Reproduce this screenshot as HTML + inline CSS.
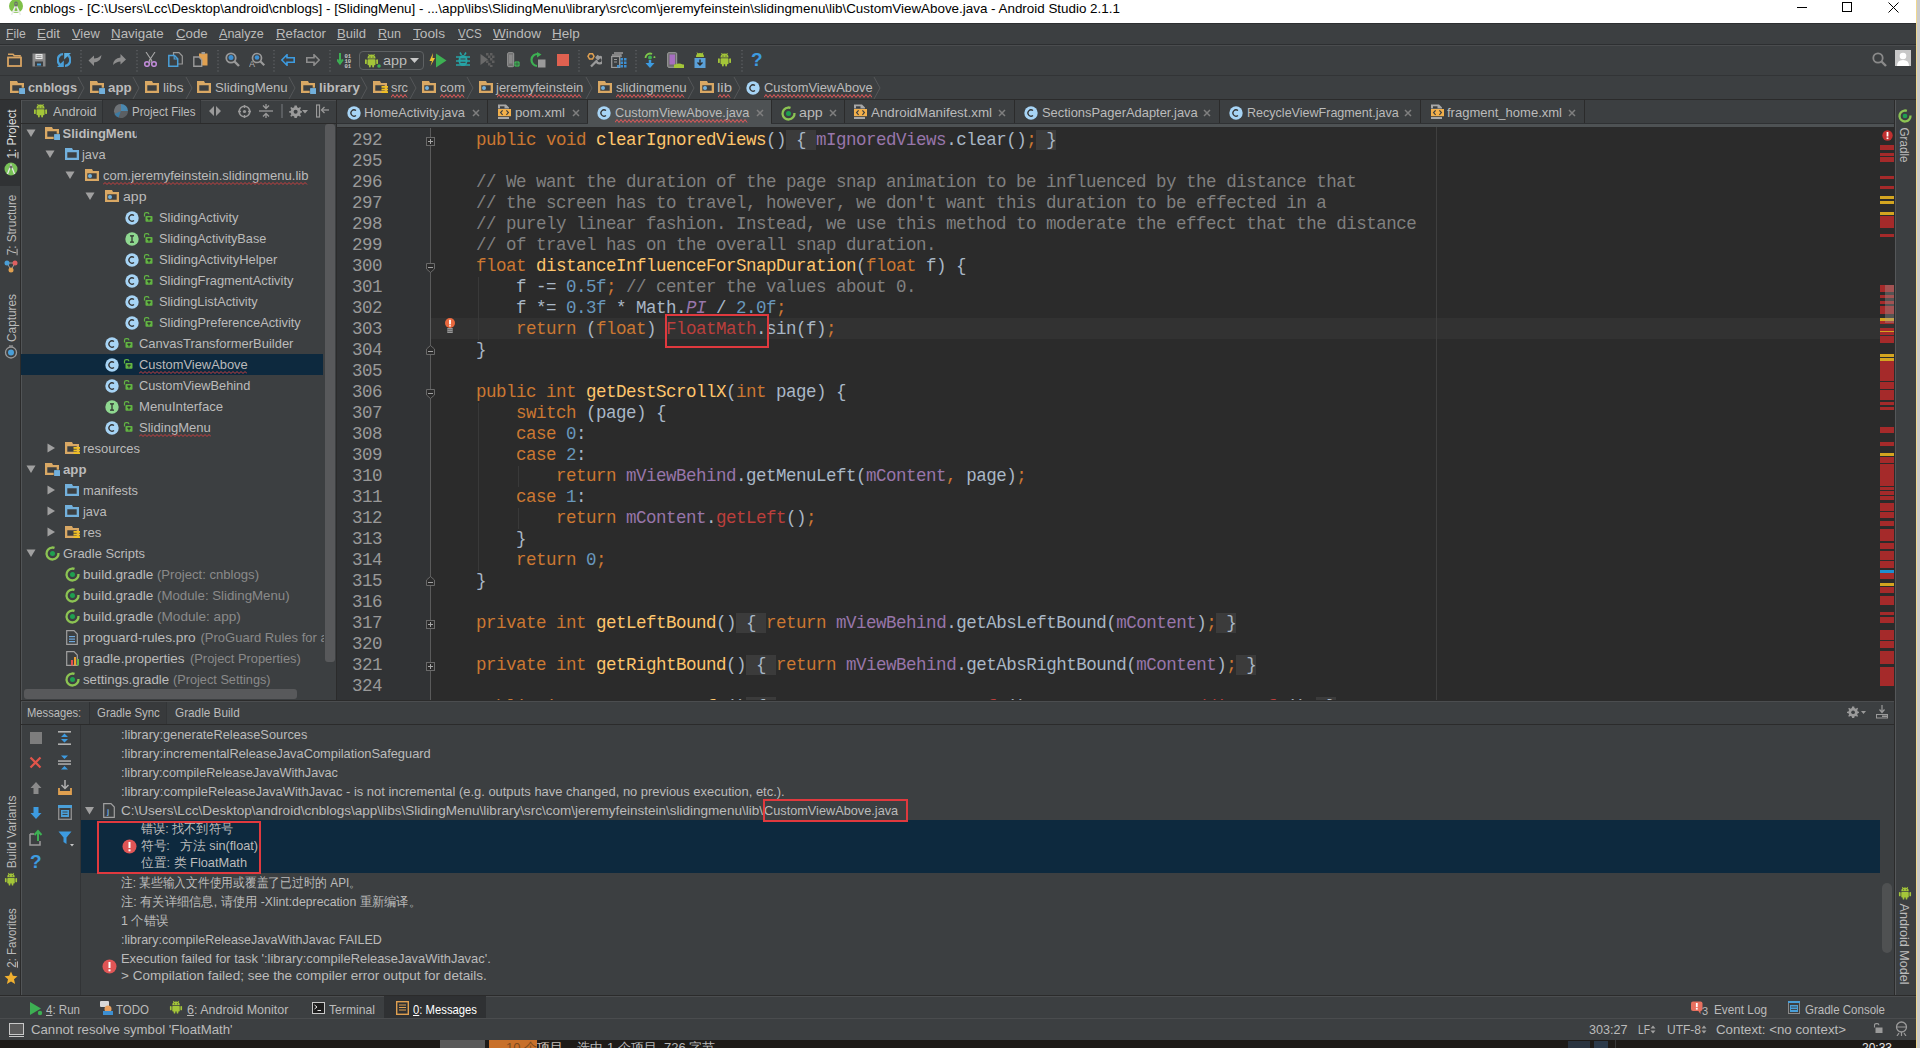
<!DOCTYPE html><html><head><meta charset="utf-8"><style>
*{margin:0;padding:0;box-sizing:border-box}
html,body{width:1920px;height:1048px;overflow:hidden;background:#3c3f41}
body{position:relative;font-family:"Liberation Sans",sans-serif}
div,span.a{position:absolute}
.t{white-space:pre}
.code span{position:static}
</style></head><body><div style="left:0px;top:0px;width:1920px;height:1048px;background:#3c3f41;"></div>
<div style="left:0px;top:0px;width:1916px;height:23px;background:#ffffff;"></div>
<div style="left:1916px;top:0px;width:1px;height:1048px;background:#f0d890;"></div>
<div style="left:1917px;top:0px;width:3px;height:1048px;background:#cbcbcb;"></div>
<div style="left:0px;top:23px;width:1916px;height:22px;background:#3c3f41;"></div>
<div style="left:0px;top:23px;width:1916px;height:1px;background:#2d2f31;"></div>
<div style="left:0px;top:44px;width:1916px;height:1px;background:#2d2f31;"></div>
<div style="left:0px;top:45px;width:1916px;height:1px;background:#4a4c4e;"></div>
<div style="left:0px;top:46px;width:1916px;height:29px;background:#3c3f41;"></div>
<div style="left:0px;top:75px;width:1916px;height:1px;background:#323436;"></div>
<div style="left:0px;top:76px;width:1916px;height:23px;background:#3c3f41;"></div>
<div style="left:0px;top:99px;width:1916px;height:1px;background:#2b2b2b;"></div>
<div class="t" style="left:29px;top:0px;height:17px;line-height:17px;font-size:13.4px;color:#000000;font-family:'Liberation Sans',sans-serif;">cnblogs - [C:\Users\Lcc\Desktop\android\cnblogs] - [SlidingMenu] - ...\app\libs\SlidingMenu\library\src\com\jeremyfeinstein\slidingmenu\lib\CustomViewAbove.java - Android Studio 2.1.1</div>
<div class="t" style="left:5.5px;top:24px;height:20px;line-height:20px;font-size:13px;color:#bbbbbb;font-family:'Liberation Sans',sans-serif;transform:scaleX(0.9405);transform-origin:0 0;"><u>F</u>ile</div>
<div class="t" style="left:36.5px;top:24px;height:20px;line-height:20px;font-size:13px;color:#bbbbbb;font-family:'Liberation Sans',sans-serif;transform:scaleX(1.0267);transform-origin:0 0;"><u>E</u>dit</div>
<div class="t" style="left:71.5px;top:24px;height:20px;line-height:20px;font-size:13px;color:#bbbbbb;font-family:'Liberation Sans',sans-serif;transform:scaleX(0.9913);transform-origin:0 0;"><u>V</u>iew</div>
<div class="t" style="left:110.5px;top:24px;height:20px;line-height:20px;font-size:13px;color:#bbbbbb;font-family:'Liberation Sans',sans-serif;transform:scaleX(1.0271);transform-origin:0 0;"><u>N</u>avigate</div>
<div class="t" style="left:175.5px;top:24px;height:20px;line-height:20px;font-size:13px;color:#bbbbbb;font-family:'Liberation Sans',sans-serif;transform:scaleX(1.0200);transform-origin:0 0;"><u>C</u>ode</div>
<div class="t" style="left:218.5px;top:24px;height:20px;line-height:20px;font-size:13px;color:#bbbbbb;font-family:'Liberation Sans',sans-serif;transform:scaleX(0.9665);transform-origin:0 0;"><u>A</u>nalyze</div>
<div class="t" style="left:275.5px;top:24px;height:20px;line-height:20px;font-size:13px;color:#bbbbbb;font-family:'Liberation Sans',sans-serif;transform:scaleX(1.0177);transform-origin:0 0;"><u>R</u>efactor</div>
<div class="t" style="left:336.5px;top:24px;height:20px;line-height:20px;font-size:13px;color:#bbbbbb;font-family:'Liberation Sans',sans-serif;transform:scaleX(1.0032);transform-origin:0 0;"><u>B</u>uild</div>
<div class="t" style="left:377.5px;top:24px;height:20px;line-height:20px;font-size:13px;color:#bbbbbb;font-family:'Liberation Sans',sans-serif;transform:scaleX(0.9644);transform-origin:0 0;"><u>R</u>un</div>
<div class="t" style="left:412.5px;top:24px;height:20px;line-height:20px;font-size:13px;color:#bbbbbb;font-family:'Liberation Sans',sans-serif;transform:scaleX(1.0544);transform-origin:0 0;"><u>T</u>ools</div>
<div class="t" style="left:457.5px;top:24px;height:20px;line-height:20px;font-size:13px;color:#bbbbbb;font-family:'Liberation Sans',sans-serif;transform:scaleX(0.8866);transform-origin:0 0;"><u>V</u>CS</div>
<div class="t" style="left:492.5px;top:24px;height:20px;line-height:20px;font-size:13px;color:#bbbbbb;font-family:'Liberation Sans',sans-serif;transform:scaleX(1.0381);transform-origin:0 0;"><u>W</u>indow</div>
<div class="t" style="left:551.5px;top:24px;height:20px;line-height:20px;font-size:13px;color:#bbbbbb;font-family:'Liberation Sans',sans-serif;transform:scaleX(1.0360);transform-origin:0 0;"><u>H</u>elp</div>
<div style="left:0px;top:100px;width:20px;height:895px;background:#3c3f41;"></div>
<div style="left:20px;top:100px;width:1px;height:895px;background:#2b2b2b;"></div>
<div style="left:21px;top:100px;width:1px;height:895px;background:#515456;"></div>
<div style="left:0px;top:100px;width:20px;height:86px;background:#303234;"></div>
<div style="left:22px;top:100px;width:315px;height:600px;background:#3c3f41;"></div>
<div style="left:336px;top:100px;width:1px;height:600px;background:#2b2b2b;"></div>
<div style="left:21px;top:123px;width:315px;height:1px;background:#2b2b2b;"></div>
<div style="left:22px;top:100px;width:314px;height:1px;background:#4b4d4f;"></div>
<div style="left:337px;top:100px;width:1557px;height:24px;background:#3c3f41;"></div>
<div style="left:337px;top:124px;width:1557px;height:3px;background:#4e5254;"></div>
<div style="left:337px;top:127px;width:1557px;height:573px;background:#2b2b2b;"></div>
<div style="left:337px;top:128px;width:93px;height:572px;background:#313335;"></div>
<div style="left:430px;top:128px;width:1px;height:572px;background:#5a5a5a;"></div>
<div style="left:1894px;top:100px;width:1px;height:895px;background:#2b2b2b;"></div>
<div style="left:1895px;top:100px;width:21px;height:895px;background:#3c3f41;"></div>
<div style="left:1895px;top:100px;width:1px;height:895px;background:#555759;"></div>
<div style="left:21px;top:700px;width:1873px;height:1px;background:#2b2b2b;"></div>
<div style="left:21px;top:701px;width:1873px;height:1px;background:#4b4d4f;"></div>
<div style="left:21px;top:724px;width:1873px;height:1px;background:#2b2b2b;"></div>
<div style="left:80px;top:725px;width:1px;height:270px;background:#323436;"></div>
<div style="left:0px;top:995px;width:1916px;height:1px;background:#2b2b2b;"></div>
<div style="left:0px;top:996px;width:1916px;height:1px;background:#4b4d4f;"></div>
<div style="left:0px;top:1018px;width:1916px;height:1px;background:#4a4c4e;"></div>
<div style="left:0px;top:1040px;width:1916px;height:8px;background:#1f1f1f;"></div>
<div style="left:337px;top:127px;width:1557px;height:573px;overflow:hidden">
<div style="left:94px;top:191px;width:1463px;height:21px;background:#323232;"></div>
<div style="left:1099px;top:0px;width:1px;height:573px;background:#3f3f3f;"></div>
<div class="t" style="left:0;top:3px;width:45px;text-align:right;height:21px;line-height:21px;font:17.5px 'Liberation Mono',monospace;letter-spacing:-0.5px;color:#999999">292</div>
<div class="t code" style="left:139px;top:3px;height:21px;line-height:21px;font:17.5px 'Liberation Mono',monospace;letter-spacing:-0.5px;color:#a9b7c6"><span style="color:#cc7832;">public </span><span style="color:#cc7832;">void </span><span style="color:#ffc66d;">clearIgnoredViews</span><span style="color:#a9b7c6;">()</span><span style="color:#a9b7c6;background:#3b3b3b;"> { </span><span style="color:#9876aa;">mIgnoredViews</span><span style="color:#a9b7c6;">.clear()</span><span style="color:#cc7832;">;</span><span style="color:#a9b7c6;background:#3b3b3b;"> }</span></div>
<div class="t" style="left:0;top:24px;width:45px;text-align:right;height:21px;line-height:21px;font:17.5px 'Liberation Mono',monospace;letter-spacing:-0.5px;color:#999999">295</div>
<div class="t" style="left:0;top:45px;width:45px;text-align:right;height:21px;line-height:21px;font:17.5px 'Liberation Mono',monospace;letter-spacing:-0.5px;color:#999999">296</div>
<div class="t code" style="left:139px;top:45px;height:21px;line-height:21px;font:17.5px 'Liberation Mono',monospace;letter-spacing:-0.5px;color:#a9b7c6"><span style="color:#808080;">// We want the duration of the page snap animation to be influenced by the distance that</span></div>
<div class="t" style="left:0;top:66px;width:45px;text-align:right;height:21px;line-height:21px;font:17.5px 'Liberation Mono',monospace;letter-spacing:-0.5px;color:#999999">297</div>
<div class="t code" style="left:139px;top:66px;height:21px;line-height:21px;font:17.5px 'Liberation Mono',monospace;letter-spacing:-0.5px;color:#a9b7c6"><span style="color:#808080;">// the screen has to travel, however, we don't want this duration to be effected in a</span></div>
<div class="t" style="left:0;top:87px;width:45px;text-align:right;height:21px;line-height:21px;font:17.5px 'Liberation Mono',monospace;letter-spacing:-0.5px;color:#999999">298</div>
<div class="t code" style="left:139px;top:87px;height:21px;line-height:21px;font:17.5px 'Liberation Mono',monospace;letter-spacing:-0.5px;color:#a9b7c6"><span style="color:#808080;">// purely linear fashion. Instead, we use this method to moderate the effect that the distance</span></div>
<div class="t" style="left:0;top:108px;width:45px;text-align:right;height:21px;line-height:21px;font:17.5px 'Liberation Mono',monospace;letter-spacing:-0.5px;color:#999999">299</div>
<div class="t code" style="left:139px;top:108px;height:21px;line-height:21px;font:17.5px 'Liberation Mono',monospace;letter-spacing:-0.5px;color:#a9b7c6"><span style="color:#808080;">// of travel has on the overall snap duration.</span></div>
<div class="t" style="left:0;top:129px;width:45px;text-align:right;height:21px;line-height:21px;font:17.5px 'Liberation Mono',monospace;letter-spacing:-0.5px;color:#999999">300</div>
<div class="t code" style="left:139px;top:129px;height:21px;line-height:21px;font:17.5px 'Liberation Mono',monospace;letter-spacing:-0.5px;color:#a9b7c6"><span style="color:#cc7832;">float </span><span style="color:#ffc66d;">distanceInfluenceForSnapDuration</span><span style="color:#a9b7c6;">(</span><span style="color:#cc7832;">float </span><span style="color:#a9b7c6;">f) {</span></div>
<div class="t" style="left:0;top:150px;width:45px;text-align:right;height:21px;line-height:21px;font:17.5px 'Liberation Mono',monospace;letter-spacing:-0.5px;color:#999999">301</div>
<div class="t code" style="left:139px;top:150px;height:21px;line-height:21px;font:17.5px 'Liberation Mono',monospace;letter-spacing:-0.5px;color:#a9b7c6"><span style="color:#a9b7c6;">    f -= </span><span style="color:#6897bb;">0.5f</span><span style="color:#cc7832;">;</span><span style="color:#808080;"> // center the values about 0.</span></div>
<div class="t" style="left:0;top:171px;width:45px;text-align:right;height:21px;line-height:21px;font:17.5px 'Liberation Mono',monospace;letter-spacing:-0.5px;color:#999999">302</div>
<div class="t code" style="left:139px;top:171px;height:21px;line-height:21px;font:17.5px 'Liberation Mono',monospace;letter-spacing:-0.5px;color:#a9b7c6"><span style="color:#a9b7c6;">    f *= </span><span style="color:#6897bb;">0.3f</span><span style="color:#a9b7c6;"> * Math.</span><span style="color:#9876aa;font-style:italic;">PI</span><span style="color:#a9b7c6;"> / </span><span style="color:#6897bb;">2.0f</span><span style="color:#cc7832;">;</span></div>
<div class="t" style="left:0;top:192px;width:45px;text-align:right;height:21px;line-height:21px;font:17.5px 'Liberation Mono',monospace;letter-spacing:-0.5px;color:#999999">303</div>
<div class="t code" style="left:139px;top:192px;height:21px;line-height:21px;font:17.5px 'Liberation Mono',monospace;letter-spacing:-0.5px;color:#a9b7c6"><span style="color:#cc7832;">    return </span><span style="color:#a9b7c6;">(</span><span style="color:#cc7832;">float</span><span style="color:#a9b7c6;">) </span><span style="color:#bc3f3c;">FloatMath</span><span style="color:#a9b7c6;">.sin(f)</span><span style="color:#cc7832;">;</span></div>
<div class="t" style="left:0;top:213px;width:45px;text-align:right;height:21px;line-height:21px;font:17.5px 'Liberation Mono',monospace;letter-spacing:-0.5px;color:#999999">304</div>
<div class="t code" style="left:139px;top:213px;height:21px;line-height:21px;font:17.5px 'Liberation Mono',monospace;letter-spacing:-0.5px;color:#a9b7c6"><span style="color:#a9b7c6;">}</span></div>
<div class="t" style="left:0;top:234px;width:45px;text-align:right;height:21px;line-height:21px;font:17.5px 'Liberation Mono',monospace;letter-spacing:-0.5px;color:#999999">305</div>
<div class="t" style="left:0;top:255px;width:45px;text-align:right;height:21px;line-height:21px;font:17.5px 'Liberation Mono',monospace;letter-spacing:-0.5px;color:#999999">306</div>
<div class="t code" style="left:139px;top:255px;height:21px;line-height:21px;font:17.5px 'Liberation Mono',monospace;letter-spacing:-0.5px;color:#a9b7c6"><span style="color:#cc7832;">public </span><span style="color:#cc7832;">int </span><span style="color:#ffc66d;">getDestScrollX</span><span style="color:#a9b7c6;">(</span><span style="color:#cc7832;">int </span><span style="color:#a9b7c6;">page) {</span></div>
<div class="t" style="left:0;top:276px;width:45px;text-align:right;height:21px;line-height:21px;font:17.5px 'Liberation Mono',monospace;letter-spacing:-0.5px;color:#999999">307</div>
<div class="t code" style="left:139px;top:276px;height:21px;line-height:21px;font:17.5px 'Liberation Mono',monospace;letter-spacing:-0.5px;color:#a9b7c6"><span style="color:#cc7832;">    switch </span><span style="color:#a9b7c6;">(page) {</span></div>
<div class="t" style="left:0;top:297px;width:45px;text-align:right;height:21px;line-height:21px;font:17.5px 'Liberation Mono',monospace;letter-spacing:-0.5px;color:#999999">308</div>
<div class="t code" style="left:139px;top:297px;height:21px;line-height:21px;font:17.5px 'Liberation Mono',monospace;letter-spacing:-0.5px;color:#a9b7c6"><span style="color:#cc7832;">    case </span><span style="color:#6897bb;">0</span><span style="color:#a9b7c6;">:</span></div>
<div class="t" style="left:0;top:318px;width:45px;text-align:right;height:21px;line-height:21px;font:17.5px 'Liberation Mono',monospace;letter-spacing:-0.5px;color:#999999">309</div>
<div class="t code" style="left:139px;top:318px;height:21px;line-height:21px;font:17.5px 'Liberation Mono',monospace;letter-spacing:-0.5px;color:#a9b7c6"><span style="color:#cc7832;">    case </span><span style="color:#6897bb;">2</span><span style="color:#a9b7c6;">:</span></div>
<div class="t" style="left:0;top:339px;width:45px;text-align:right;height:21px;line-height:21px;font:17.5px 'Liberation Mono',monospace;letter-spacing:-0.5px;color:#999999">310</div>
<div class="t code" style="left:139px;top:339px;height:21px;line-height:21px;font:17.5px 'Liberation Mono',monospace;letter-spacing:-0.5px;color:#a9b7c6"><span style="color:#cc7832;">        return </span><span style="color:#9876aa;">mViewBehind</span><span style="color:#a9b7c6;">.getMenuLeft(</span><span style="color:#9876aa;">mContent</span><span style="color:#cc7832;">, </span><span style="color:#a9b7c6;">page)</span><span style="color:#cc7832;">;</span></div>
<div class="t" style="left:0;top:360px;width:45px;text-align:right;height:21px;line-height:21px;font:17.5px 'Liberation Mono',monospace;letter-spacing:-0.5px;color:#999999">311</div>
<div class="t code" style="left:139px;top:360px;height:21px;line-height:21px;font:17.5px 'Liberation Mono',monospace;letter-spacing:-0.5px;color:#a9b7c6"><span style="color:#cc7832;">    case </span><span style="color:#6897bb;">1</span><span style="color:#a9b7c6;">:</span></div>
<div class="t" style="left:0;top:381px;width:45px;text-align:right;height:21px;line-height:21px;font:17.5px 'Liberation Mono',monospace;letter-spacing:-0.5px;color:#999999">312</div>
<div class="t code" style="left:139px;top:381px;height:21px;line-height:21px;font:17.5px 'Liberation Mono',monospace;letter-spacing:-0.5px;color:#a9b7c6"><span style="color:#cc7832;">        return </span><span style="color:#9876aa;">mContent</span><span style="color:#a9b7c6;">.</span><span style="color:#bc3f3c;">getLeft</span><span style="color:#a9b7c6;">()</span><span style="color:#cc7832;">;</span></div>
<div class="t" style="left:0;top:402px;width:45px;text-align:right;height:21px;line-height:21px;font:17.5px 'Liberation Mono',monospace;letter-spacing:-0.5px;color:#999999">313</div>
<div class="t code" style="left:139px;top:402px;height:21px;line-height:21px;font:17.5px 'Liberation Mono',monospace;letter-spacing:-0.5px;color:#a9b7c6"><span style="color:#a9b7c6;">    }</span></div>
<div class="t" style="left:0;top:423px;width:45px;text-align:right;height:21px;line-height:21px;font:17.5px 'Liberation Mono',monospace;letter-spacing:-0.5px;color:#999999">314</div>
<div class="t code" style="left:139px;top:423px;height:21px;line-height:21px;font:17.5px 'Liberation Mono',monospace;letter-spacing:-0.5px;color:#a9b7c6"><span style="color:#cc7832;">    return </span><span style="color:#6897bb;">0</span><span style="color:#cc7832;">;</span></div>
<div class="t" style="left:0;top:444px;width:45px;text-align:right;height:21px;line-height:21px;font:17.5px 'Liberation Mono',monospace;letter-spacing:-0.5px;color:#999999">315</div>
<div class="t code" style="left:139px;top:444px;height:21px;line-height:21px;font:17.5px 'Liberation Mono',monospace;letter-spacing:-0.5px;color:#a9b7c6"><span style="color:#a9b7c6;">}</span></div>
<div class="t" style="left:0;top:465px;width:45px;text-align:right;height:21px;line-height:21px;font:17.5px 'Liberation Mono',monospace;letter-spacing:-0.5px;color:#999999">316</div>
<div class="t" style="left:0;top:486px;width:45px;text-align:right;height:21px;line-height:21px;font:17.5px 'Liberation Mono',monospace;letter-spacing:-0.5px;color:#999999">317</div>
<div class="t code" style="left:139px;top:486px;height:21px;line-height:21px;font:17.5px 'Liberation Mono',monospace;letter-spacing:-0.5px;color:#a9b7c6"><span style="color:#cc7832;">private </span><span style="color:#cc7832;">int </span><span style="color:#ffc66d;">getLeftBound</span><span style="color:#a9b7c6;">()</span><span style="color:#a9b7c6;background:#3b3b3b;"> { </span><span style="color:#cc7832;">return </span><span style="color:#9876aa;">mViewBehind</span><span style="color:#a9b7c6;">.getAbsLeftBound(</span><span style="color:#9876aa;">mContent</span><span style="color:#a9b7c6;">)</span><span style="color:#cc7832;">;</span><span style="color:#a9b7c6;background:#3b3b3b;"> }</span></div>
<div class="t" style="left:0;top:507px;width:45px;text-align:right;height:21px;line-height:21px;font:17.5px 'Liberation Mono',monospace;letter-spacing:-0.5px;color:#999999">320</div>
<div class="t" style="left:0;top:528px;width:45px;text-align:right;height:21px;line-height:21px;font:17.5px 'Liberation Mono',monospace;letter-spacing:-0.5px;color:#999999">321</div>
<div class="t code" style="left:139px;top:528px;height:21px;line-height:21px;font:17.5px 'Liberation Mono',monospace;letter-spacing:-0.5px;color:#a9b7c6"><span style="color:#cc7832;">private </span><span style="color:#cc7832;">int </span><span style="color:#ffc66d;">getRightBound</span><span style="color:#a9b7c6;">()</span><span style="color:#a9b7c6;background:#3b3b3b;"> { </span><span style="color:#cc7832;">return </span><span style="color:#9876aa;">mViewBehind</span><span style="color:#a9b7c6;">.getAbsRightBound(</span><span style="color:#9876aa;">mContent</span><span style="color:#a9b7c6;">)</span><span style="color:#cc7832;">;</span><span style="color:#a9b7c6;background:#3b3b3b;"> }</span></div>
<div class="t" style="left:0;top:549px;width:45px;text-align:right;height:21px;line-height:21px;font:17.5px 'Liberation Mono',monospace;letter-spacing:-0.5px;color:#999999">324</div>
<div class="t" style="left:0;top:570px;width:45px;text-align:right;height:21px;line-height:21px;font:17.5px 'Liberation Mono',monospace;letter-spacing:-0.5px;color:#999999">325</div>
<div class="t code" style="left:139px;top:570px;height:21px;line-height:21px;font:17.5px 'Liberation Mono',monospace;letter-spacing:-0.5px;color:#a9b7c6"><span style="color:#cc7832;">public </span><span style="color:#cc7832;">int </span><span style="color:#ffc66d;">getContentLeft</span><span style="color:#a9b7c6;">()</span><span style="color:#a9b7c6;background:#3b3b3b;"> { </span><span style="color:#cc7832;">return </span><span style="color:#9876aa;">mContent</span><span style="color:#a9b7c6;">.</span><span style="color:#bc3f3c;">getLeft</span><span style="color:#a9b7c6;">() + </span><span style="color:#9876aa;">mContent</span><span style="color:#a9b7c6;">.</span><span style="color:#bc3f3c;">getPaddingLeft</span><span style="color:#a9b7c6;">()</span><span style="color:#cc7832;">;</span><span style="color:#a9b7c6;background:#3b3b3b;"> }</span></div>
</div>
<div style="left:21px;top:354px;width:302px;height:21px;background:#0d293e;"></div>
<svg style="position:absolute;left:26px;top:128px;" width="10" height="10" viewBox="0 0 10 10"><path d="M0.5 1.5 H9.5 L5 9 Z" fill="#a0a0a0"/></svg>
<svg style="position:absolute;left:45px;top:127px;" width="15" height="13" viewBox="0 0 15 13"><path fill-rule="evenodd" d="M0 0 H7 L8 2 H14 V12 H0 Z M2.3 4.2 V9.8 H11.7 V4.2 Z" fill="#d9a864"/><rect x="9" y="7" width="6" height="6" fill="#72b0dc" stroke="#3c3f41" stroke-width="0.6"/><rect x="9.3" y="7.3" width="5.7" height="5.7" fill="#72b0dc"/></svg>
<div class="t" style="left:62.5px;top:123px;height:21px;line-height:21px;font-size:13px;color:#bbbbbb;font-family:'Liberation Sans',sans-serif;font-weight:bold;width:74px;overflow:hidden;">SlidingMenu</div>
<svg style="position:absolute;left:45px;top:149px;" width="10" height="10" viewBox="0 0 10 10"><path d="M0.5 1.5 H9.5 L5 9 Z" fill="#a0a0a0"/></svg>
<svg style="position:absolute;left:65px;top:148px;" width="15" height="13" viewBox="0 0 15 13"><path fill-rule="evenodd" d="M0 0 H7 L8 2 H14 V12 H0 Z M2.3 4.2 V9.8 H11.7 V4.2 Z" fill="#72b0dc"/></svg>
<div class="t" style="left:81.5px;top:144px;height:21px;line-height:21px;font-size:13px;color:#bbbbbb;font-family:'Liberation Sans',sans-serif;transform:scaleX(0.9854);transform-origin:0 0;">java</div>
<svg style="position:absolute;left:65px;top:170px;" width="10" height="10" viewBox="0 0 10 10"><path d="M0.5 1.5 H9.5 L5 9 Z" fill="#a0a0a0"/></svg>
<svg style="position:absolute;left:85px;top:169px;" width="15" height="13" viewBox="0 0 15 13"><path fill-rule="evenodd" d="M0 0 H7 L8 2 H14 V12 H0 Z M2.3 4.2 V9.8 H11.7 V4.2 Z" fill="#d9a864"/><circle cx="5" cy="7" r="2" fill="#72b0dc"/></svg>
<div class="t" style="left:102.5px;top:165px;height:21px;line-height:21px;font-size:13px;color:#bbbbbb;font-family:'Liberation Sans',sans-serif;transform:scaleX(1.0010);transform-origin:0 0;">com.jeremyfeinstein.slidingmenu.lib</div>
<svg style="position:absolute;left:85px;top:191px;" width="10" height="10" viewBox="0 0 10 10"><path d="M0.5 1.5 H9.5 L5 9 Z" fill="#a0a0a0"/></svg>
<svg style="position:absolute;left:105px;top:190px;" width="15" height="13" viewBox="0 0 15 13"><path fill-rule="evenodd" d="M0 0 H7 L8 2 H14 V12 H0 Z M2.3 4.2 V9.8 H11.7 V4.2 Z" fill="#d9a864"/><circle cx="5" cy="7" r="2" fill="#72b0dc"/></svg>
<div class="t" style="left:122.5px;top:186px;height:21px;line-height:21px;font-size:13px;color:#bbbbbb;font-family:'Liberation Sans',sans-serif;transform:scaleX(1.0835);transform-origin:0 0;">app</div>
<svg style="position:absolute;left:125px;top:211px;" width="14" height="14" viewBox="0 0 14 14"><circle cx="7" cy="7" r="6.7" fill="#a7d4f5"/><path d="M9 4.6 A3.1 3.1 0 1 0 9 9.4" fill="none" stroke="#333333" stroke-width="1.25"/></svg>
<svg style="position:absolute;left:143px;top:212px;" width="10" height="10" viewBox="0 0 10 10"><path d="M1.5 4.5 V2.2 Q1.5 0.6 3.2 0.6 H4.2 Q5.9 0.6 5.9 2.2" fill="none" stroke="#62b543" stroke-width="1.2"/><rect x="2.5" y="4" width="7" height="5.8" rx="0.8" fill="#62b543"/><rect x="4.3" y="5.6" width="3.4" height="1.1" fill="#2b2b2b"/><rect x="5.45" y="5.6" width="1.1" height="2.8" fill="#2b2b2b"/></svg>
<div class="t" style="left:158.5px;top:207px;height:21px;line-height:21px;font-size:13px;color:#bbbbbb;font-family:'Liberation Sans',sans-serif;transform:scaleX(0.9913);transform-origin:0 0;">SlidingActivity</div>
<svg style="position:absolute;left:125px;top:232px;" width="14" height="14" viewBox="0 0 14 14"><circle cx="7" cy="7" r="6.7" fill="#8fd890"/><path d="M5 3.8 H9 M5 10.2 H9 M7 3.8 V10.2" fill="none" stroke="#2b2b2b" stroke-width="1.2"/></svg>
<svg style="position:absolute;left:143px;top:233px;" width="10" height="10" viewBox="0 0 10 10"><path d="M1.5 4.5 V2.2 Q1.5 0.6 3.2 0.6 H4.2 Q5.9 0.6 5.9 2.2" fill="none" stroke="#62b543" stroke-width="1.2"/><rect x="2.5" y="4" width="7" height="5.8" rx="0.8" fill="#62b543"/><rect x="4.3" y="5.6" width="3.4" height="1.1" fill="#2b2b2b"/><rect x="5.45" y="5.6" width="1.1" height="2.8" fill="#2b2b2b"/></svg>
<div class="t" style="left:158.5px;top:228px;height:21px;line-height:21px;font-size:13px;color:#bbbbbb;font-family:'Liberation Sans',sans-serif;transform:scaleX(0.9770);transform-origin:0 0;">SlidingActivityBase</div>
<svg style="position:absolute;left:125px;top:253px;" width="14" height="14" viewBox="0 0 14 14"><circle cx="7" cy="7" r="6.7" fill="#a7d4f5"/><path d="M9 4.6 A3.1 3.1 0 1 0 9 9.4" fill="none" stroke="#333333" stroke-width="1.25"/></svg>
<svg style="position:absolute;left:143px;top:254px;" width="10" height="10" viewBox="0 0 10 10"><path d="M1.5 4.5 V2.2 Q1.5 0.6 3.2 0.6 H4.2 Q5.9 0.6 5.9 2.2" fill="none" stroke="#62b543" stroke-width="1.2"/><rect x="2.5" y="4" width="7" height="5.8" rx="0.8" fill="#62b543"/><rect x="4.3" y="5.6" width="3.4" height="1.1" fill="#2b2b2b"/><rect x="5.45" y="5.6" width="1.1" height="2.8" fill="#2b2b2b"/></svg>
<div class="t" style="left:158.5px;top:249px;height:21px;line-height:21px;font-size:13px;color:#bbbbbb;font-family:'Liberation Sans',sans-serif;transform:scaleX(0.9992);transform-origin:0 0;">SlidingActivityHelper</div>
<svg style="position:absolute;left:125px;top:274px;" width="14" height="14" viewBox="0 0 14 14"><circle cx="7" cy="7" r="6.7" fill="#a7d4f5"/><path d="M9 4.6 A3.1 3.1 0 1 0 9 9.4" fill="none" stroke="#333333" stroke-width="1.25"/></svg>
<svg style="position:absolute;left:143px;top:275px;" width="10" height="10" viewBox="0 0 10 10"><path d="M1.5 4.5 V2.2 Q1.5 0.6 3.2 0.6 H4.2 Q5.9 0.6 5.9 2.2" fill="none" stroke="#62b543" stroke-width="1.2"/><rect x="2.5" y="4" width="7" height="5.8" rx="0.8" fill="#62b543"/><rect x="4.3" y="5.6" width="3.4" height="1.1" fill="#2b2b2b"/><rect x="5.45" y="5.6" width="1.1" height="2.8" fill="#2b2b2b"/></svg>
<div class="t" style="left:158.5px;top:270px;height:21px;line-height:21px;font-size:13px;color:#bbbbbb;font-family:'Liberation Sans',sans-serif;transform:scaleX(0.9895);transform-origin:0 0;">SlidingFragmentActivity</div>
<svg style="position:absolute;left:125px;top:295px;" width="14" height="14" viewBox="0 0 14 14"><circle cx="7" cy="7" r="6.7" fill="#a7d4f5"/><path d="M9 4.6 A3.1 3.1 0 1 0 9 9.4" fill="none" stroke="#333333" stroke-width="1.25"/></svg>
<svg style="position:absolute;left:143px;top:296px;" width="10" height="10" viewBox="0 0 10 10"><path d="M1.5 4.5 V2.2 Q1.5 0.6 3.2 0.6 H4.2 Q5.9 0.6 5.9 2.2" fill="none" stroke="#62b543" stroke-width="1.2"/><rect x="2.5" y="4" width="7" height="5.8" rx="0.8" fill="#62b543"/><rect x="4.3" y="5.6" width="3.4" height="1.1" fill="#2b2b2b"/><rect x="5.45" y="5.6" width="1.1" height="2.8" fill="#2b2b2b"/></svg>
<div class="t" style="left:158.5px;top:291px;height:21px;line-height:21px;font-size:13px;color:#bbbbbb;font-family:'Liberation Sans',sans-serif;transform:scaleX(0.9818);transform-origin:0 0;">SlidingListActivity</div>
<svg style="position:absolute;left:125px;top:316px;" width="14" height="14" viewBox="0 0 14 14"><circle cx="7" cy="7" r="6.7" fill="#a7d4f5"/><path d="M9 4.6 A3.1 3.1 0 1 0 9 9.4" fill="none" stroke="#333333" stroke-width="1.25"/></svg>
<svg style="position:absolute;left:143px;top:317px;" width="10" height="10" viewBox="0 0 10 10"><path d="M1.5 4.5 V2.2 Q1.5 0.6 3.2 0.6 H4.2 Q5.9 0.6 5.9 2.2" fill="none" stroke="#62b543" stroke-width="1.2"/><rect x="2.5" y="4" width="7" height="5.8" rx="0.8" fill="#62b543"/><rect x="4.3" y="5.6" width="3.4" height="1.1" fill="#2b2b2b"/><rect x="5.45" y="5.6" width="1.1" height="2.8" fill="#2b2b2b"/></svg>
<div class="t" style="left:158.5px;top:312px;height:21px;line-height:21px;font-size:13px;color:#bbbbbb;font-family:'Liberation Sans',sans-serif;transform:scaleX(0.9855);transform-origin:0 0;">SlidingPreferenceActivity</div>
<svg style="position:absolute;left:105px;top:337px;" width="14" height="14" viewBox="0 0 14 14"><circle cx="7" cy="7" r="6.7" fill="#a7d4f5"/><path d="M9 4.6 A3.1 3.1 0 1 0 9 9.4" fill="none" stroke="#333333" stroke-width="1.25"/></svg>
<svg style="position:absolute;left:123px;top:338px;" width="10" height="10" viewBox="0 0 10 10"><path d="M1.5 4.5 V2.2 Q1.5 0.6 3.2 0.6 H4.2 Q5.9 0.6 5.9 2.2" fill="none" stroke="#62b543" stroke-width="1.2"/><rect x="2.5" y="4" width="7" height="5.8" rx="0.8" fill="#62b543"/><rect x="4.3" y="5.6" width="3.4" height="1.1" fill="#2b2b2b"/><rect x="5.45" y="5.6" width="1.1" height="2.8" fill="#2b2b2b"/></svg>
<div class="t" style="left:138.5px;top:333px;height:21px;line-height:21px;font-size:13px;color:#bbbbbb;font-family:'Liberation Sans',sans-serif;transform:scaleX(0.9971);transform-origin:0 0;">CanvasTransformerBuilder</div>
<svg style="position:absolute;left:105px;top:358px;" width="14" height="14" viewBox="0 0 14 14"><circle cx="7" cy="7" r="6.7" fill="#a7d4f5"/><path d="M9 4.6 A3.1 3.1 0 1 0 9 9.4" fill="none" stroke="#333333" stroke-width="1.25"/></svg>
<svg style="position:absolute;left:123px;top:359px;" width="10" height="10" viewBox="0 0 10 10"><path d="M1.5 4.5 V2.2 Q1.5 0.6 3.2 0.6 H4.2 Q5.9 0.6 5.9 2.2" fill="none" stroke="#62b543" stroke-width="1.2"/><rect x="2.5" y="4" width="7" height="5.8" rx="0.8" fill="#62b543"/><rect x="4.3" y="5.6" width="3.4" height="1.1" fill="#2b2b2b"/><rect x="5.45" y="5.6" width="1.1" height="2.8" fill="#2b2b2b"/></svg>
<div class="t" style="left:138.5px;top:354px;height:21px;line-height:21px;font-size:13px;color:#bbbbbb;font-family:'Liberation Sans',sans-serif;transform:scaleX(0.9919);transform-origin:0 0;">CustomViewAbove</div>
<svg style="position:absolute;left:105px;top:379px;" width="14" height="14" viewBox="0 0 14 14"><circle cx="7" cy="7" r="6.7" fill="#a7d4f5"/><path d="M9 4.6 A3.1 3.1 0 1 0 9 9.4" fill="none" stroke="#333333" stroke-width="1.25"/></svg>
<svg style="position:absolute;left:123px;top:380px;" width="10" height="10" viewBox="0 0 10 10"><path d="M1.5 4.5 V2.2 Q1.5 0.6 3.2 0.6 H4.2 Q5.9 0.6 5.9 2.2" fill="none" stroke="#62b543" stroke-width="1.2"/><rect x="2.5" y="4" width="7" height="5.8" rx="0.8" fill="#62b543"/><rect x="4.3" y="5.6" width="3.4" height="1.1" fill="#2b2b2b"/><rect x="5.45" y="5.6" width="1.1" height="2.8" fill="#2b2b2b"/></svg>
<div class="t" style="left:138.5px;top:375px;height:21px;line-height:21px;font-size:13px;color:#bbbbbb;font-family:'Liberation Sans',sans-serif;transform:scaleX(0.9831);transform-origin:0 0;">CustomViewBehind</div>
<svg style="position:absolute;left:105px;top:400px;" width="14" height="14" viewBox="0 0 14 14"><circle cx="7" cy="7" r="6.7" fill="#8fd890"/><path d="M5 3.8 H9 M5 10.2 H9 M7 3.8 V10.2" fill="none" stroke="#2b2b2b" stroke-width="1.2"/></svg>
<svg style="position:absolute;left:123px;top:401px;" width="10" height="10" viewBox="0 0 10 10"><path d="M1.5 4.5 V2.2 Q1.5 0.6 3.2 0.6 H4.2 Q5.9 0.6 5.9 2.2" fill="none" stroke="#62b543" stroke-width="1.2"/><rect x="2.5" y="4" width="7" height="5.8" rx="0.8" fill="#62b543"/><rect x="4.3" y="5.6" width="3.4" height="1.1" fill="#2b2b2b"/><rect x="5.45" y="5.6" width="1.1" height="2.8" fill="#2b2b2b"/></svg>
<div class="t" style="left:138.5px;top:396px;height:21px;line-height:21px;font-size:13px;color:#bbbbbb;font-family:'Liberation Sans',sans-serif;transform:scaleX(1.0120);transform-origin:0 0;">MenuInterface</div>
<svg style="position:absolute;left:105px;top:421px;" width="14" height="14" viewBox="0 0 14 14"><circle cx="7" cy="7" r="6.7" fill="#a7d4f5"/><path d="M9 4.6 A3.1 3.1 0 1 0 9 9.4" fill="none" stroke="#333333" stroke-width="1.25"/></svg>
<svg style="position:absolute;left:123px;top:422px;" width="10" height="10" viewBox="0 0 10 10"><path d="M1.5 4.5 V2.2 Q1.5 0.6 3.2 0.6 H4.2 Q5.9 0.6 5.9 2.2" fill="none" stroke="#62b543" stroke-width="1.2"/><rect x="2.5" y="4" width="7" height="5.8" rx="0.8" fill="#62b543"/><rect x="4.3" y="5.6" width="3.4" height="1.1" fill="#2b2b2b"/><rect x="5.45" y="5.6" width="1.1" height="2.8" fill="#2b2b2b"/></svg>
<div class="t" style="left:138.5px;top:417px;height:21px;line-height:21px;font-size:13px;color:#bbbbbb;font-family:'Liberation Sans',sans-serif;transform:scaleX(1.0036);transform-origin:0 0;">SlidingMenu</div>
<svg style="position:absolute;left:46px;top:443px;" width="10" height="10" viewBox="0 0 10 10"><path d="M1.5 0.5 V9.5 L9 5 Z" fill="#a0a0a0"/></svg>
<svg style="position:absolute;left:65px;top:442px;" width="15" height="13" viewBox="0 0 15 13"><path fill-rule="evenodd" d="M0 0 H7 L8 2 H14 V12 H0 Z M2.3 4.2 V9.8 H11.7 V4.2 Z" fill="#d9a864"/><g fill="#f0c020"><rect x="8.5" y="5" width="6.5" height="1.8"/><rect x="8.5" y="7.6" width="6.5" height="1.8"/><rect x="8.5" y="10.2" width="6.5" height="1.8"/></g></svg>
<div class="t" style="left:82.5px;top:438px;height:21px;line-height:21px;font-size:13px;color:#bbbbbb;font-family:'Liberation Sans',sans-serif;transform:scaleX(0.9986);transform-origin:0 0;">resources</div>
<svg style="position:absolute;left:26px;top:464px;" width="10" height="10" viewBox="0 0 10 10"><path d="M0.5 1.5 H9.5 L5 9 Z" fill="#a0a0a0"/></svg>
<svg style="position:absolute;left:45px;top:463px;" width="15" height="13" viewBox="0 0 15 13"><path fill-rule="evenodd" d="M0 0 H7 L8 2 H14 V12 H0 Z M2.3 4.2 V9.8 H11.7 V4.2 Z" fill="#d9a864"/><rect x="9" y="7" width="6" height="6" fill="#72b0dc" stroke="#3c3f41" stroke-width="0.6"/><rect x="9.3" y="7.3" width="5.7" height="5.7" fill="#72b0dc"/></svg>
<div class="t" style="left:62.5px;top:459px;height:21px;line-height:21px;font-size:13px;color:#bbbbbb;font-family:'Liberation Sans',sans-serif;font-weight:bold;transform:scaleX(1.0168);transform-origin:0 0;">app</div>
<svg style="position:absolute;left:46px;top:485px;" width="10" height="10" viewBox="0 0 10 10"><path d="M1.5 0.5 V9.5 L9 5 Z" fill="#a0a0a0"/></svg>
<svg style="position:absolute;left:65px;top:484px;" width="15" height="13" viewBox="0 0 15 13"><path fill-rule="evenodd" d="M0 0 H7 L8 2 H14 V12 H0 Z M2.3 4.2 V9.8 H11.7 V4.2 Z" fill="#72b0dc"/></svg>
<div class="t" style="left:82.5px;top:480px;height:21px;line-height:21px;font-size:13px;color:#bbbbbb;font-family:'Liberation Sans',sans-serif;transform:scaleX(0.9887);transform-origin:0 0;">manifests</div>
<svg style="position:absolute;left:46px;top:506px;" width="10" height="10" viewBox="0 0 10 10"><path d="M1.5 0.5 V9.5 L9 5 Z" fill="#a0a0a0"/></svg>
<svg style="position:absolute;left:65px;top:505px;" width="15" height="13" viewBox="0 0 15 13"><path fill-rule="evenodd" d="M0 0 H7 L8 2 H14 V12 H0 Z M2.3 4.2 V9.8 H11.7 V4.2 Z" fill="#72b0dc"/></svg>
<div class="t" style="left:82.5px;top:501px;height:21px;line-height:21px;font-size:13px;color:#bbbbbb;font-family:'Liberation Sans',sans-serif;transform:scaleX(0.9854);transform-origin:0 0;">java</div>
<svg style="position:absolute;left:46px;top:527px;" width="10" height="10" viewBox="0 0 10 10"><path d="M1.5 0.5 V9.5 L9 5 Z" fill="#a0a0a0"/></svg>
<svg style="position:absolute;left:65px;top:526px;" width="15" height="13" viewBox="0 0 15 13"><path fill-rule="evenodd" d="M0 0 H7 L8 2 H14 V12 H0 Z M2.3 4.2 V9.8 H11.7 V4.2 Z" fill="#d9a864"/><g fill="#f0c020"><rect x="8.5" y="5" width="6.5" height="1.8"/><rect x="8.5" y="7.6" width="6.5" height="1.8"/><rect x="8.5" y="10.2" width="6.5" height="1.8"/></g></svg>
<div class="t" style="left:82.5px;top:522px;height:21px;line-height:21px;font-size:13px;color:#bbbbbb;font-family:'Liberation Sans',sans-serif;transform:scaleX(1.0189);transform-origin:0 0;">res</div>
<svg style="position:absolute;left:26px;top:548px;" width="10" height="10" viewBox="0 0 10 10"><path d="M0.5 1.5 H9.5 L5 9 Z" fill="#a0a0a0"/></svg>
<svg style="position:absolute;left:45px;top:546px;" width="15" height="15" viewBox="0 0 15 15"><circle cx="7.5" cy="7.5" r="6.0" fill="none" stroke="#8cc453" stroke-width="2.3" stroke-dasharray="30.16 7.54" transform="rotate(-5 7.5 7.5)"/><circle cx="7.5" cy="7.5" r="2.5" fill="#1fa050"/></svg>
<div class="t" style="left:62.5px;top:543px;height:21px;line-height:21px;font-size:13px;color:#bbbbbb;font-family:'Liberation Sans',sans-serif;transform:scaleX(0.9956);transform-origin:0 0;">Gradle Scripts</div>
<svg style="position:absolute;left:65px;top:567px;" width="15" height="15" viewBox="0 0 15 15"><circle cx="7.5" cy="7.5" r="6.0" fill="none" stroke="#8cc453" stroke-width="2.3" stroke-dasharray="30.16 7.54" transform="rotate(-5 7.5 7.5)"/><circle cx="7.5" cy="7.5" r="2.5" fill="#1fa050"/></svg>
<div class="t" style="left:82.5px;top:564px;height:21px;line-height:21px;font-size:13px;color:#bbbbbb;font-family:'Liberation Sans',sans-serif;transform:scaleX(1.0459);transform-origin:0 0;">build.gradle</div>
<div class="t" style="left:156.5px;top:564px;height:21px;line-height:21px;font-size:13px;color:#8a8a8a;font-family:'Liberation Sans',sans-serif;transform:scaleX(1.0084);transform-origin:0 0;">(Project: cnblogs)</div>
<svg style="position:absolute;left:65px;top:588px;" width="15" height="15" viewBox="0 0 15 15"><circle cx="7.5" cy="7.5" r="6.0" fill="none" stroke="#8cc453" stroke-width="2.3" stroke-dasharray="30.16 7.54" transform="rotate(-5 7.5 7.5)"/><circle cx="7.5" cy="7.5" r="2.5" fill="#1fa050"/></svg>
<div class="t" style="left:82.5px;top:585px;height:21px;line-height:21px;font-size:13px;color:#bbbbbb;font-family:'Liberation Sans',sans-serif;transform:scaleX(1.0459);transform-origin:0 0;">build.gradle</div>
<div class="t" style="left:156.5px;top:585px;height:21px;line-height:21px;font-size:13px;color:#8a8a8a;font-family:'Liberation Sans',sans-serif;transform:scaleX(1.0195);transform-origin:0 0;">(Module: SlidingMenu)</div>
<svg style="position:absolute;left:65px;top:609px;" width="15" height="15" viewBox="0 0 15 15"><circle cx="7.5" cy="7.5" r="6.0" fill="none" stroke="#8cc453" stroke-width="2.3" stroke-dasharray="30.16 7.54" transform="rotate(-5 7.5 7.5)"/><circle cx="7.5" cy="7.5" r="2.5" fill="#1fa050"/></svg>
<div class="t" style="left:82.5px;top:606px;height:21px;line-height:21px;font-size:13px;color:#bbbbbb;font-family:'Liberation Sans',sans-serif;transform:scaleX(1.0459);transform-origin:0 0;">build.gradle</div>
<div class="t" style="left:156.5px;top:606px;height:21px;line-height:21px;font-size:13px;color:#8a8a8a;font-family:'Liberation Sans',sans-serif;transform:scaleX(1.0448);transform-origin:0 0;">(Module: app)</div>
<svg style="position:absolute;left:66px;top:630px;" width="12" height="15" viewBox="0 0 12 15"><path d="M0.7 0.7 H8 L11.3 4 V14.3 H0.7 Z" fill="none" stroke="#a0a0a0" stroke-width="1.2"/><rect x="3" y="6" width="6" height="1.2" fill="#6fa8dc"/><rect x="3" y="8.5" width="6" height="1.2" fill="#6fa8dc"/><rect x="3" y="11" width="6" height="1.2" fill="#6fa8dc"/></svg>
<div class="t" style="left:82.5px;top:627px;height:21px;line-height:21px;font-size:13px;color:#bbbbbb;font-family:'Liberation Sans',sans-serif;transform:scaleX(1.0529);transform-origin:0 0;">proguard-rules.pro</div>
<div class="t" style="left:200.5px;top:627px;height:21px;line-height:21px;font-size:13px;color:#8a8a8a;font-family:'Liberation Sans',sans-serif;width:123px;overflow:hidden;">(ProGuard Rules for app)</div>
<svg style="position:absolute;left:66px;top:651px;" width="14" height="15" viewBox="0 0 14 15"><path d="M0.7 0.7 H8 L11.3 4 V14.3 H0.7 Z" fill="none" stroke="#a0a0a0" stroke-width="1.2"/><rect x="5" y="9" width="2" height="5.5" fill="#e05050"/><rect x="8" y="6" width="2" height="8.5" fill="#f0a030"/><rect x="11" y="8" width="2" height="6.5" fill="#62b543"/></svg>
<div class="t" style="left:82.5px;top:648px;height:21px;line-height:21px;font-size:13px;color:#bbbbbb;font-family:'Liberation Sans',sans-serif;transform:scaleX(1.0414);transform-origin:0 0;">gradle.properties</div>
<div class="t" style="left:189.5px;top:648px;height:21px;line-height:21px;font-size:13px;color:#8a8a8a;font-family:'Liberation Sans',sans-serif;transform:scaleX(0.9895);transform-origin:0 0;">(Project Properties)</div>
<svg style="position:absolute;left:65px;top:672px;" width="15" height="15" viewBox="0 0 15 15"><circle cx="7.5" cy="7.5" r="6.0" fill="none" stroke="#8cc453" stroke-width="2.3" stroke-dasharray="30.16 7.54" transform="rotate(-5 7.5 7.5)"/><circle cx="7.5" cy="7.5" r="2.5" fill="#1fa050"/></svg>
<div class="t" style="left:82.5px;top:669px;height:21px;line-height:21px;font-size:13px;color:#bbbbbb;font-family:'Liberation Sans',sans-serif;transform:scaleX(1.0183);transform-origin:0 0;">settings.gradle</div>
<div class="t" style="left:172.5px;top:669px;height:21px;line-height:21px;font-size:13px;color:#8a8a8a;font-family:'Liberation Sans',sans-serif;transform:scaleX(0.9789);transform-origin:0 0;">(Project Settings)</div>
<svg style="position:absolute;left:103px;top:182px;" width="205" height="3" viewBox="0 0 205 3"><path d="M0 2.5 L2 0.5 L4 2.5 L6 0.5 L8 2.5 L10 0.5 L12 2.5 L14 0.5 L16 2.5 L18 0.5 L20 2.5 L22 0.5 L24 2.5 L26 0.5 L28 2.5 L30 0.5 L32 2.5 L34 0.5 L36 2.5 L38 0.5 L40 2.5 L42 0.5 L44 2.5 L46 0.5 L48 2.5 L50 0.5 L52 2.5 L54 0.5 L56 2.5 L58 0.5 L60 2.5 L62 0.5 L64 2.5 L66 0.5 L68 2.5 L70 0.5 L72 2.5 L74 0.5 L76 2.5 L78 0.5 L80 2.5 L82 0.5 L84 2.5 L86 0.5 L88 2.5 L90 0.5 L92 2.5 L94 0.5 L96 2.5 L98 0.5 L100 2.5 L102 0.5 L104 2.5 L106 0.5 L108 2.5 L110 0.5 L112 2.5 L114 0.5 L116 2.5 L118 0.5 L120 2.5 L122 0.5 L124 2.5 L126 0.5 L128 2.5 L130 0.5 L132 2.5 L134 0.5 L136 2.5 L138 0.5 L140 2.5 L142 0.5 L144 2.5 L146 0.5 L148 2.5 L150 0.5 L152 2.5 L154 0.5 L156 2.5 L158 0.5 L160 2.5 L162 0.5 L164 2.5 L166 0.5 L168 2.5 L170 0.5 L172 2.5 L174 0.5 L176 2.5 L178 0.5 L180 2.5 L182 0.5 L184 2.5 L186 0.5 L188 2.5 L190 0.5 L192 2.5 L194 0.5 L196 2.5 L198 0.5 L200 2.5 L202 0.5 L204 2.5" fill="none" stroke="#c94040" stroke-width="1"/></svg>
<svg style="position:absolute;left:139px;top:371px;" width="108" height="3" viewBox="0 0 108 3"><path d="M0 2.5 L2 0.5 L4 2.5 L6 0.5 L8 2.5 L10 0.5 L12 2.5 L14 0.5 L16 2.5 L18 0.5 L20 2.5 L22 0.5 L24 2.5 L26 0.5 L28 2.5 L30 0.5 L32 2.5 L34 0.5 L36 2.5 L38 0.5 L40 2.5 L42 0.5 L44 2.5 L46 0.5 L48 2.5 L50 0.5 L52 2.5 L54 0.5 L56 2.5 L58 0.5 L60 2.5 L62 0.5 L64 2.5 L66 0.5 L68 2.5 L70 0.5 L72 2.5 L74 0.5 L76 2.5 L78 0.5 L80 2.5 L82 0.5 L84 2.5 L86 0.5 L88 2.5 L90 0.5 L92 2.5 L94 0.5 L96 2.5 L98 0.5 L100 2.5 L102 0.5 L104 2.5 L106 0.5 L108 2.5" fill="none" stroke="#c94040" stroke-width="1"/></svg>
<svg style="position:absolute;left:139px;top:434px;" width="72" height="3" viewBox="0 0 72 3"><path d="M0 2.5 L2 0.5 L4 2.5 L6 0.5 L8 2.5 L10 0.5 L12 2.5 L14 0.5 L16 2.5 L18 0.5 L20 2.5 L22 0.5 L24 2.5 L26 0.5 L28 2.5 L30 0.5 L32 2.5 L34 0.5 L36 2.5 L38 0.5 L40 2.5 L42 0.5 L44 2.5 L46 0.5 L48 2.5 L50 0.5 L52 2.5 L54 0.5 L56 2.5 L58 0.5 L60 2.5 L62 0.5 L64 2.5 L66 0.5 L68 2.5 L70 0.5 L72 2.5" fill="none" stroke="#c94040" stroke-width="1"/></svg>
<div style="left:325px;top:124px;width:10px;height:538px;background:#58595b;border-radius:3px;"></div>
<div style="left:24px;top:689px;width:273px;height:10px;background:#58595b;border-radius:3px;"></div>
<div style="left:102px;top:100px;width:98px;height:23px;background:#393b3d;"></div>
<div style="left:102px;top:100px;width:1px;height:23px;background:#2f3133;"></div>
<div style="left:200px;top:100px;width:1px;height:23px;background:#2f3133;"></div>
<svg style="position:absolute;left:33px;top:103px;" width="15" height="15" viewBox="0 0 15 15"><g transform="scale(1.0)"><path d="M3.5 5.5 A4 4 0 0 1 11.5 5.5 Z" fill="#a4c639"/><rect x="3.5" y="6.3" width="8" height="6" rx="0.8" fill="#a4c639"/><rect x="1" y="6.3" width="1.8" height="4.8" rx="0.9" fill="#a4c639"/><rect x="12.2" y="6.3" width="1.8" height="4.8" rx="0.9" fill="#a4c639"/><rect x="5" y="11" width="1.8" height="3.5" rx="0.9" fill="#a4c639"/><rect x="8.2" y="11" width="1.8" height="3.5" rx="0.9" fill="#a4c639"/><path d="M4.5 1 L5.8 3 M10.5 1 L9.2 3" stroke="#a4c639" stroke-width="0.9"/><circle cx="6" cy="4" r="0.6" fill="#3c3f41"/><circle cx="9" cy="4" r="0.6" fill="#3c3f41"/></g></svg>
<div class="t" style="left:52.5px;top:100px;height:23px;line-height:23px;font-size:13px;color:#bbbbbb;font-family:'Liberation Sans',sans-serif;transform:scaleX(0.9730);transform-origin:0 0;">Android</div>
<svg style="position:absolute;left:113px;top:103px;" width="16" height="16" viewBox="0 0 16 16"><path d="M8 8 L8 1 A7 7 0 0 1 15 8 Z" fill="#4a88b0"/><path d="M8 8 L15 8 A7 7 0 0 1 4 13.7 Z" fill="#5b5f63"/><path d="M8 8 L4 13.7 A7 7 0 0 1 8 1 Z" fill="#6e7276"/><path d="M8 8 L5.5 14.5 A7 7 0 0 1 1.5 11 Z" fill="#3d7ba3"/></svg>
<div class="t" style="left:132px;top:100px;height:23px;line-height:23px;font-size:13px;color:#bbbbbb;font-family:'Liberation Sans',sans-serif;transform:scaleX(0.8879);transform-origin:0 0;">Project Files</div>
<svg style="position:absolute;left:208px;top:105px;" width="14" height="12" viewBox="0 0 14 12"><path d="M6 1 V11 L1 6 Z M8 1 V11 L13 6 Z" fill="#9a9a9a"/></svg>
<svg style="position:absolute;left:238px;top:105px;" width="13" height="13" viewBox="0 0 13 13"><circle cx="6.5" cy="6.5" r="5.3" fill="none" stroke="#9a9a9a" stroke-width="1.6"/><circle cx="6.5" cy="6.5" r="1.6" fill="#9a9a9a"/><path d="M6.5 0 V3 M6.5 10 V13 M0 6.5 H3 M10 6.5 H13" stroke="#9a9a9a" stroke-width="1.4"/></svg>
<svg style="position:absolute;left:259px;top:104px;" width="14" height="14" viewBox="0 0 14 14"><path d="M0 7 H14" stroke="#9a9a9a" stroke-width="1.3"/><path d="M4 1.5 L7 4.5 L10 1.5 M4 12.5 L7 9.5 L10 12.5 M7 0 V5 M7 9 V14" fill="none" stroke="#9a9a9a" stroke-width="1.3"/></svg>
<div style="left:281px;top:104px;width:2px;height:14px;background:#5a5d60;"></div>
<svg style="position:absolute;left:289px;top:105px;" width="13" height="13" viewBox="0 0 13 13"><g transform="scale(1.0)"><path d="M6.5 0.5 L7.8 0.5 L8.1 2.3 L9.6 3 L11.1 2 L12 2.9 L11 4.4 L11.7 5.9 L13 6.2 V7.5 L11.7 7.8 L11 9.3 L12 10.8 L11.1 11.7 L9.6 10.7 L8.1 11.4 L7.8 13 H5.5 L5.2 11.4 L3.7 10.7 L2.2 11.7 L1.3 10.8 L2.3 9.3 L1.6 7.8 L0 7.5 V6.2 L1.6 5.9 L2.3 4.4 L1.3 2.9 L2.2 2 L3.7 3 L5.2 2.3 L5.5 0.5 Z" fill="#9a9a9a"/><circle cx="6.6" cy="6.8" r="2" fill="#3c3f41"/></g></svg>
<svg style="position:absolute;left:302px;top:110px;" width="6" height="4" viewBox="0 0 6 4"><path d="M0 0 H6 L3 3.5 Z" fill="#9a9a9a"/></svg>
<svg style="position:absolute;left:316px;top:104px;" width="14" height="14" viewBox="0 0 14 14"><rect x="0.5" y="1" width="3" height="12" fill="none" stroke="#9a9a9a" stroke-width="1.2"/><path d="M6 6 H13" stroke="#9a9a9a" stroke-width="1.3"/><path d="M8.5 3 L5.5 6 L8.5 9" fill="none" stroke="#9a9a9a" stroke-width="1.3"/></svg>
<div class="t" style="left:-15.456787109375px;top:124.6px;width:54.91357421875px;height:18px;line-height:18px;text-align:center;font-size:13px;color:#dddddd;transform:rotate(-90deg) scaleX(0.8923);"><u>1</u>: Project</div>
<svg style="position:absolute;left:4px;top:162px;" width="14" height="14" viewBox="0 0 14 14"><circle cx="7" cy="7" r="6.5" fill="#78c257"/><path d="M3.5 12 L7 3 L10.5 12" fill="none" stroke="#e8e8e8" stroke-width="1.3"/><circle cx="7" cy="5" r="1.6" fill="#6a6a6a"/></svg>
<div class="t" style="left:-21.59814453125px;top:216.2px;width:67.1962890625px;height:18px;line-height:18px;text-align:center;font-size:13px;color:#bbbbbb;transform:rotate(-90deg) scaleX(0.9018);"><u>7</u>: Structure</div>
<svg style="position:absolute;left:4px;top:259px;" width="14" height="14" viewBox="0 0 14 14"><path d="M3 4 L7 11 L11 4 Z" fill="none" stroke="#9a9a9a" stroke-width="1"/><circle cx="3" cy="4" r="2.5" fill="#4a9fd8"/><circle cx="11" cy="4" r="2.5" fill="#e06060"/><circle cx="7" cy="11" r="2.5" fill="#e0a050"/></svg>
<div class="t" style="left:-14.37451171875px;top:308.5px;width:52.7490234375px;height:18px;line-height:18px;text-align:center;font-size:13px;color:#bbbbbb;transform:rotate(-90deg) scaleX(0.9100);">Captures</div>
<svg style="position:absolute;left:4px;top:345px;" width="14" height="14" viewBox="0 0 14 14"><circle cx="7" cy="7.5" r="5.5" fill="none" stroke="#9a9a9a" stroke-width="1.3"/><circle cx="7" cy="7.5" r="3" fill="#4a9fd8"/><path d="M5 1 H9" stroke="#9a9a9a" stroke-width="1.3"/></svg>
<div class="t" style="left:-27.6220703125px;top:822.85px;width:79.244140625px;height:18px;line-height:18px;text-align:center;font-size:13px;color:#bbbbbb;transform:rotate(-90deg) scaleX(0.9174);">Build Variants</div>
<svg style="position:absolute;left:4px;top:872px;" width="14" height="14" viewBox="0 0 14 14"><g transform="scale(0.9333333333333333)"><path d="M3.5 5.5 A4 4 0 0 1 11.5 5.5 Z" fill="#a4c639"/><rect x="3.5" y="6.3" width="8" height="6" rx="0.8" fill="#a4c639"/><rect x="1" y="6.3" width="1.8" height="4.8" rx="0.9" fill="#a4c639"/><rect x="12.2" y="6.3" width="1.8" height="4.8" rx="0.9" fill="#a4c639"/><rect x="5" y="11" width="1.8" height="3.5" rx="0.9" fill="#a4c639"/><rect x="8.2" y="11" width="1.8" height="3.5" rx="0.9" fill="#a4c639"/><path d="M4.5 1 L5.8 3 M10.5 1 L9.2 3" stroke="#a4c639" stroke-width="0.9"/><circle cx="6" cy="4" r="0.6" fill="#3c3f41"/><circle cx="9" cy="4" r="0.6" fill="#3c3f41"/></g></svg>
<div class="t" style="left:-21.956787109375px;top:928.8px;width:67.91357421875px;height:18px;line-height:18px;text-align:center;font-size:13px;color:#bbbbbb;transform:rotate(-90deg) scaleX(0.8746);"><u>2</u>: Favorites</div>
<svg style="position:absolute;left:4px;top:971px;" width="14" height="14" viewBox="0 0 14 14"><path d="M7 0.5 L8.9 4.8 L13.5 5.2 L10 8.3 L11.1 13 L7 10.5 L2.9 13 L4 8.3 L0.5 5.2 L5.1 4.8 Z" fill="#f0b030"/></svg>
<div class="t" style="left:1884.490478515625px;top:135.64999999999998px;width:39.01904296875px;height:18px;line-height:18px;text-align:center;font-size:13px;color:#bbbbbb;transform:rotate(90deg) scaleX(0.8996);">Gradle</div>
<svg style="position:absolute;left:1898px;top:109px;" width="14" height="14" viewBox="0 0 14 14"><circle cx="7.0" cy="7.0" r="5.5" fill="none" stroke="#8cc453" stroke-width="2.3" stroke-dasharray="27.65 6.91" transform="rotate(-5 7.0 7.0)"/><circle cx="7.0" cy="7.0" r="2.3333333333333335" fill="#1fa050"/></svg>
<div class="t" style="left:1862.08642578125px;top:935.45px;width:83.8271484375px;height:18px;line-height:18px;text-align:center;font-size:13px;color:#bbbbbb;transform:rotate(90deg) scaleX(0.9651);">Android Model</div>
<svg style="position:absolute;left:1898px;top:886px;" width="14" height="14" viewBox="0 0 14 14"><g transform="scale(0.9333333333333333)"><path d="M3.5 5.5 A4 4 0 0 1 11.5 5.5 Z" fill="#a4c639"/><rect x="3.5" y="6.3" width="8" height="6" rx="0.8" fill="#a4c639"/><rect x="1" y="6.3" width="1.8" height="4.8" rx="0.9" fill="#a4c639"/><rect x="12.2" y="6.3" width="1.8" height="4.8" rx="0.9" fill="#a4c639"/><rect x="5" y="11" width="1.8" height="3.5" rx="0.9" fill="#a4c639"/><rect x="8.2" y="11" width="1.8" height="3.5" rx="0.9" fill="#a4c639"/><path d="M4.5 1 L5.8 3 M10.5 1 L9.2 3" stroke="#a4c639" stroke-width="0.9"/><circle cx="6" cy="4" r="0.6" fill="#3c3f41"/><circle cx="9" cy="4" r="0.6" fill="#3c3f41"/></g></svg>
<div style="left:588px;top:100px;width:183px;height:27px;background:#4e5254;"></div>
<svg style="position:absolute;left:347px;top:106px;" width="14" height="14" viewBox="0 0 14 14"><circle cx="7" cy="7" r="6.7" fill="#a7d4f5"/><path d="M9 4.6 A3.1 3.1 0 1 0 9 9.4" fill="none" stroke="#333333" stroke-width="1.25"/></svg>
<div class="t" style="left:363.5px;top:103px;height:20px;line-height:20px;font-size:13px;color:#bbbbbb;font-family:'Liberation Sans',sans-serif;transform:scaleX(0.9869);transform-origin:0 0;">HomeActivity.java</div>
<svg style="position:absolute;left:472px;top:109px;" width="8" height="8" viewBox="0 0 8 8"><path d="M1 1 L7 7 M7 1 L1 7" stroke="#7f7f7f" stroke-width="1.5"/></svg>
<div style="left:487px;top:100px;width:1px;height:24px;background:#2b2b2b;"></div>
<svg style="position:absolute;left:498px;top:104px;" width="13" height="16" viewBox="0 0 13 16"><path d="M0 0.5 H8 L11 3.5 V4.5 H0 Z" fill="#a8a8a8"/><rect x="2" y="2.3" width="4.5" height="2.2" fill="#3c3f41"/><rect x="0" y="5" width="13" height="7.2" fill="#f2b04c"/><path d="M4.6 6.4 L2.6 8.6 L4.6 10.8 M8.4 6.4 L10.4 8.6 L8.4 10.8" fill="none" stroke="#3c3f41" stroke-width="1.2"/><rect x="0" y="13" width="11" height="2" fill="#a8a8a8"/></svg>
<div class="t" style="left:514.5px;top:103px;height:20px;line-height:20px;font-size:13px;color:#bbbbbb;font-family:'Liberation Sans',sans-serif;transform:scaleX(1.0180);transform-origin:0 0;">pom.xml</div>
<svg style="position:absolute;left:572px;top:109px;" width="8" height="8" viewBox="0 0 8 8"><path d="M1 1 L7 7 M7 1 L1 7" stroke="#7f7f7f" stroke-width="1.5"/></svg>
<div style="left:587px;top:100px;width:1px;height:24px;background:#2b2b2b;"></div>
<svg style="position:absolute;left:597px;top:106px;" width="14" height="14" viewBox="0 0 14 14"><circle cx="7" cy="7" r="6.7" fill="#a7d4f5"/><path d="M9 4.6 A3.1 3.1 0 1 0 9 9.4" fill="none" stroke="#333333" stroke-width="1.25"/></svg>
<div class="t" style="left:615.0px;top:103px;height:20px;line-height:20px;font-size:13px;color:#bbbbbb;font-family:'Liberation Sans',sans-serif;transform:scaleX(0.9796);transform-origin:0 0;">CustomViewAbove.java</div>
<svg style="position:absolute;left:756px;top:109px;" width="8" height="8" viewBox="0 0 8 8"><path d="M1 1 L7 7 M7 1 L1 7" stroke="#7f7f7f" stroke-width="1.5"/></svg>
<div style="left:771px;top:100px;width:1px;height:24px;background:#2b2b2b;"></div>
<svg style="position:absolute;left:781px;top:106px;" width="15" height="15" viewBox="0 0 15 15"><circle cx="7.5" cy="7.5" r="6.0" fill="none" stroke="#8cc453" stroke-width="2.3" stroke-dasharray="30.16 7.54" transform="rotate(-5 7.5 7.5)"/><circle cx="7.5" cy="7.5" r="2.5" fill="#1fa050"/></svg>
<div class="t" style="left:798.5px;top:103px;height:20px;line-height:20px;font-size:13px;color:#bbbbbb;font-family:'Liberation Sans',sans-serif;transform:scaleX(1.0927);transform-origin:0 0;">app</div>
<svg style="position:absolute;left:829px;top:109px;" width="8" height="8" viewBox="0 0 8 8"><path d="M1 1 L7 7 M7 1 L1 7" stroke="#7f7f7f" stroke-width="1.5"/></svg>
<div style="left:844px;top:100px;width:1px;height:24px;background:#2b2b2b;"></div>
<svg style="position:absolute;left:854px;top:104px;" width="13" height="16" viewBox="0 0 13 16"><path d="M0 0.5 H8 L11 3.5 V4.5 H0 Z" fill="#a8a8a8"/><rect x="2" y="2.3" width="4.5" height="2.2" fill="#3c3f41"/><rect x="0" y="5" width="13" height="7.2" fill="#f2b04c"/><path d="M4.6 6.4 L2.6 8.6 L4.6 10.8 M8.4 6.4 L10.4 8.6 L8.4 10.8" fill="none" stroke="#3c3f41" stroke-width="1.2"/><rect x="0" y="13" width="11" height="2" fill="#a8a8a8"/></svg>
<div class="t" style="left:871.2px;top:103px;height:20px;line-height:20px;font-size:13px;color:#bbbbbb;font-family:'Liberation Sans',sans-serif;transform:scaleX(1.0274);transform-origin:0 0;">AndroidManifest.xml</div>
<svg style="position:absolute;left:998px;top:109px;" width="8" height="8" viewBox="0 0 8 8"><path d="M1 1 L7 7 M7 1 L1 7" stroke="#7f7f7f" stroke-width="1.5"/></svg>
<div style="left:1014px;top:100px;width:1px;height:24px;background:#2b2b2b;"></div>
<svg style="position:absolute;left:1024px;top:106px;" width="14" height="14" viewBox="0 0 14 14"><circle cx="7" cy="7" r="6.7" fill="#a7d4f5"/><path d="M9 4.6 A3.1 3.1 0 1 0 9 9.4" fill="none" stroke="#333333" stroke-width="1.25"/></svg>
<div class="t" style="left:1041.5px;top:103px;height:20px;line-height:20px;font-size:13px;color:#bbbbbb;font-family:'Liberation Sans',sans-serif;transform:scaleX(0.9928);transform-origin:0 0;">SectionsPagerAdapter.java</div>
<svg style="position:absolute;left:1203px;top:109px;" width="8" height="8" viewBox="0 0 8 8"><path d="M1 1 L7 7 M7 1 L1 7" stroke="#7f7f7f" stroke-width="1.5"/></svg>
<div style="left:1219px;top:100px;width:1px;height:24px;background:#2b2b2b;"></div>
<svg style="position:absolute;left:1229px;top:106px;" width="14" height="14" viewBox="0 0 14 14"><circle cx="7" cy="7" r="6.7" fill="#a7d4f5"/><path d="M9 4.6 A3.1 3.1 0 1 0 9 9.4" fill="none" stroke="#333333" stroke-width="1.25"/></svg>
<div class="t" style="left:1246.5px;top:103px;height:20px;line-height:20px;font-size:13px;color:#bbbbbb;font-family:'Liberation Sans',sans-serif;transform:scaleX(0.9646);transform-origin:0 0;">RecycleViewFragment.java</div>
<svg style="position:absolute;left:1404px;top:109px;" width="8" height="8" viewBox="0 0 8 8"><path d="M1 1 L7 7 M7 1 L1 7" stroke="#7f7f7f" stroke-width="1.5"/></svg>
<div style="left:1420px;top:100px;width:1px;height:24px;background:#2b2b2b;"></div>
<svg style="position:absolute;left:1431px;top:104px;" width="13" height="16" viewBox="0 0 13 16"><path d="M0 0.5 H8 L11 3.5 V4.5 H0 Z" fill="#a8a8a8"/><rect x="2" y="2.3" width="4.5" height="2.2" fill="#3c3f41"/><rect x="0" y="5" width="13" height="7.2" fill="#f2b04c"/><path d="M4.6 6.4 L2.6 8.6 L4.6 10.8 M8.4 6.4 L10.4 8.6 L8.4 10.8" fill="none" stroke="#3c3f41" stroke-width="1.2"/><rect x="0" y="13" width="11" height="2" fill="#a8a8a8"/></svg>
<div class="t" style="left:1447.2px;top:103px;height:20px;line-height:20px;font-size:13px;color:#bbbbbb;font-family:'Liberation Sans',sans-serif;transform:scaleX(1.0010);transform-origin:0 0;">fragment_home.xml</div>
<svg style="position:absolute;left:1568px;top:109px;" width="8" height="8" viewBox="0 0 8 8"><path d="M1 1 L7 7 M7 1 L1 7" stroke="#7f7f7f" stroke-width="1.5"/></svg>
<div style="left:1584px;top:100px;width:1px;height:24px;background:#2b2b2b;"></div>
<div style="left:337px;top:123px;width:1557px;height:1px;background:#2f3133;"></div>
<div style="left:588px;top:123px;width:183px;height:1px;background:#4e5254;"></div>
<svg style="position:absolute;left:615px;top:119px;" width="134" height="4" viewBox="0 0 134 4"><path d="M0 3.5 L2 0.5 L4 3.5 L6 0.5 L8 3.5 L10 0.5 L12 3.5 L14 0.5 L16 3.5 L18 0.5 L20 3.5 L22 0.5 L24 3.5 L26 0.5 L28 3.5 L30 0.5 L32 3.5 L34 0.5 L36 3.5 L38 0.5 L40 3.5 L42 0.5 L44 3.5 L46 0.5 L48 3.5 L50 0.5 L52 3.5 L54 0.5 L56 3.5 L58 0.5 L60 3.5 L62 0.5 L64 3.5 L66 0.5 L68 3.5 L70 0.5 L72 3.5 L74 0.5 L76 3.5 L78 0.5 L80 3.5 L82 0.5 L84 3.5 L86 0.5 L88 3.5 L90 0.5 L92 3.5 L94 0.5 L96 3.5 L98 0.5 L100 3.5 L102 0.5 L104 3.5 L106 0.5 L108 3.5 L110 0.5 L112 3.5 L114 0.5 L116 3.5 L118 0.5 L120 3.5 L122 0.5 L124 3.5 L126 0.5 L128 3.5 L130 0.5 L132 3.5" fill="none" stroke="#e05a5a" stroke-width="1"/></svg>
<svg style="position:absolute;left:10px;top:81px;" width="15" height="13" viewBox="0 0 15 13"><path fill-rule="evenodd" d="M0 0 H7 L8 2 H14 V12 H0 Z M2.3 4.2 V9.8 H11.7 V4.2 Z" fill="#d9a864"/><rect x="9" y="7" width="6" height="6" fill="#72b0dc" stroke="#3c3f41" stroke-width="0.6"/><rect x="9.3" y="7.3" width="5.7" height="5.7" fill="#72b0dc"/></svg>
<div class="t" style="left:27.5px;top:78px;height:20px;line-height:20px;font-size:13px;color:#bbbbbb;font-family:'Liberation Sans',sans-serif;font-weight:bold;transform:scaleX(0.9832);transform-origin:0 0;">cnblogs</div>
<svg style="position:absolute;left:77px;top:77px;" width="8" height="22" viewBox="0 0 8 22"><path d="M1 0 L7 11 L1 22" fill="none" stroke="#555759" stroke-width="1"/></svg>
<svg style="position:absolute;left:90px;top:81px;" width="15" height="13" viewBox="0 0 15 13"><path fill-rule="evenodd" d="M0 0 H7 L8 2 H14 V12 H0 Z M2.3 4.2 V9.8 H11.7 V4.2 Z" fill="#d9a864"/><rect x="9" y="7" width="6" height="6" fill="#72b0dc" stroke="#3c3f41" stroke-width="0.6"/><rect x="9.3" y="7.3" width="5.7" height="5.7" fill="#72b0dc"/></svg>
<div class="t" style="left:107.5px;top:78px;height:20px;line-height:20px;font-size:13px;color:#bbbbbb;font-family:'Liberation Sans',sans-serif;font-weight:bold;transform:scaleX(1.0211);transform-origin:0 0;">app</div>
<svg style="position:absolute;left:132px;top:77px;" width="8" height="22" viewBox="0 0 8 22"><path d="M1 0 L7 11 L1 22" fill="none" stroke="#555759" stroke-width="1"/></svg>
<svg style="position:absolute;left:145px;top:81px;" width="15" height="13" viewBox="0 0 15 13"><path fill-rule="evenodd" d="M0 0 H7 L8 2 H14 V12 H0 Z M2.3 4.2 V9.8 H11.7 V4.2 Z" fill="#d9a864"/></svg>
<div class="t" style="left:162.5px;top:78px;height:20px;line-height:20px;font-size:13px;color:#bbbbbb;font-family:'Liberation Sans',sans-serif;transform:scaleX(1.0509);transform-origin:0 0;">libs</div>
<svg style="position:absolute;left:185px;top:77px;" width="8" height="22" viewBox="0 0 8 22"><path d="M1 0 L7 11 L1 22" fill="none" stroke="#555759" stroke-width="1"/></svg>
<svg style="position:absolute;left:197px;top:81px;" width="15" height="13" viewBox="0 0 15 13"><path fill-rule="evenodd" d="M0 0 H7 L8 2 H14 V12 H0 Z M2.3 4.2 V9.8 H11.7 V4.2 Z" fill="#d9a864"/></svg>
<div class="t" style="left:214.5px;top:78px;height:20px;line-height:20px;font-size:13px;color:#bbbbbb;font-family:'Liberation Sans',sans-serif;transform:scaleX(1.0162);transform-origin:0 0;">SlidingMenu</div>
<svg style="position:absolute;left:288px;top:77px;" width="8" height="22" viewBox="0 0 8 22"><path d="M1 0 L7 11 L1 22" fill="none" stroke="#555759" stroke-width="1"/></svg>
<svg style="position:absolute;left:301px;top:81px;" width="15" height="13" viewBox="0 0 15 13"><path fill-rule="evenodd" d="M0 0 H7 L8 2 H14 V12 H0 Z M2.3 4.2 V9.8 H11.7 V4.2 Z" fill="#d9a864"/><rect x="9" y="7" width="6" height="6" fill="#72b0dc" stroke="#3c3f41" stroke-width="0.6"/><rect x="9.3" y="7.3" width="5.7" height="5.7" fill="#72b0dc"/></svg>
<div class="t" style="left:318.5px;top:78px;height:20px;line-height:20px;font-size:13px;color:#bbbbbb;font-family:'Liberation Sans',sans-serif;font-weight:bold;transform:scaleX(1.0316);transform-origin:0 0;">library</div>
<svg style="position:absolute;left:360px;top:77px;" width="8" height="22" viewBox="0 0 8 22"><path d="M1 0 L7 11 L1 22" fill="none" stroke="#555759" stroke-width="1"/></svg>
<svg style="position:absolute;left:373px;top:81px;" width="15" height="13" viewBox="0 0 15 13"><path fill-rule="evenodd" d="M0 0 H7 L8 2 H14 V12 H0 Z M2.3 4.2 V9.8 H11.7 V4.2 Z" fill="#d9a864"/><g fill="#f0c020"><rect x="8.5" y="5" width="6.5" height="1.8"/><rect x="8.5" y="7.6" width="6.5" height="1.8"/><rect x="8.5" y="10.2" width="6.5" height="1.8"/></g></svg>
<div class="t" style="left:390.5px;top:78px;height:20px;line-height:20px;font-size:13px;color:#bbbbbb;font-family:'Liberation Sans',sans-serif;transform:scaleX(0.9810);transform-origin:0 0;">src</div>
<svg style="position:absolute;left:409px;top:77px;" width="8" height="22" viewBox="0 0 8 22"><path d="M1 0 L7 11 L1 22" fill="none" stroke="#555759" stroke-width="1"/></svg>
<svg style="position:absolute;left:422px;top:81px;" width="15" height="13" viewBox="0 0 15 13"><path fill-rule="evenodd" d="M0 0 H7 L8 2 H14 V12 H0 Z M2.3 4.2 V9.8 H11.7 V4.2 Z" fill="#d9a864"/><circle cx="5" cy="7" r="2" fill="#72b0dc"/></svg>
<div class="t" style="left:439.5px;top:78px;height:20px;line-height:20px;font-size:13px;color:#bbbbbb;font-family:'Liberation Sans',sans-serif;transform:scaleX(1.0180);transform-origin:0 0;">com</div>
<svg style="position:absolute;left:466px;top:77px;" width="8" height="22" viewBox="0 0 8 22"><path d="M1 0 L7 11 L1 22" fill="none" stroke="#555759" stroke-width="1"/></svg>
<svg style="position:absolute;left:479px;top:81px;" width="15" height="13" viewBox="0 0 15 13"><path fill-rule="evenodd" d="M0 0 H7 L8 2 H14 V12 H0 Z M2.3 4.2 V9.8 H11.7 V4.2 Z" fill="#d9a864"/><circle cx="5" cy="7" r="2" fill="#72b0dc"/></svg>
<div class="t" style="left:496.2px;top:78px;height:20px;line-height:20px;font-size:13px;color:#bbbbbb;font-family:'Liberation Sans',sans-serif;transform:scaleX(0.9986);transform-origin:0 0;">jeremyfeinstein</div>
<svg style="position:absolute;left:585px;top:77px;" width="8" height="22" viewBox="0 0 8 22"><path d="M1 0 L7 11 L1 22" fill="none" stroke="#555759" stroke-width="1"/></svg>
<svg style="position:absolute;left:598px;top:81px;" width="15" height="13" viewBox="0 0 15 13"><path fill-rule="evenodd" d="M0 0 H7 L8 2 H14 V12 H0 Z M2.3 4.2 V9.8 H11.7 V4.2 Z" fill="#d9a864"/><circle cx="5" cy="7" r="2" fill="#72b0dc"/></svg>
<div class="t" style="left:615.5px;top:78px;height:20px;line-height:20px;font-size:13px;color:#bbbbbb;font-family:'Liberation Sans',sans-serif;transform:scaleX(1.0191);transform-origin:0 0;">slidingmenu</div>
<svg style="position:absolute;left:687px;top:77px;" width="8" height="22" viewBox="0 0 8 22"><path d="M1 0 L7 11 L1 22" fill="none" stroke="#555759" stroke-width="1"/></svg>
<svg style="position:absolute;left:700px;top:81px;" width="15" height="13" viewBox="0 0 15 13"><path fill-rule="evenodd" d="M0 0 H7 L8 2 H14 V12 H0 Z M2.3 4.2 V9.8 H11.7 V4.2 Z" fill="#d9a864"/><circle cx="5" cy="7" r="2" fill="#72b0dc"/></svg>
<div class="t" style="left:717.2px;top:78px;height:20px;line-height:20px;font-size:13px;color:#bbbbbb;font-family:'Liberation Sans',sans-serif;transform:scaleX(1.1533);transform-origin:0 0;">lib</div>
<svg style="position:absolute;left:733px;top:77px;" width="8" height="22" viewBox="0 0 8 22"><path d="M1 0 L7 11 L1 22" fill="none" stroke="#555759" stroke-width="1"/></svg>
<svg style="position:absolute;left:746px;top:81px;" width="14" height="14" viewBox="0 0 14 14"><circle cx="7" cy="7" r="6.7" fill="#a7d4f5"/><path d="M9 4.6 A3.1 3.1 0 1 0 9 9.4" fill="none" stroke="#333333" stroke-width="1.25"/></svg>
<div class="t" style="left:763.5px;top:78px;height:20px;line-height:20px;font-size:13px;color:#bbbbbb;font-family:'Liberation Sans',sans-serif;transform:scaleX(0.9919);transform-origin:0 0;">CustomViewAbove</div>
<svg style="position:absolute;left:873px;top:77px;" width="8" height="22" viewBox="0 0 8 22"><path d="M1 0 L7 11 L1 22" fill="none" stroke="#555759" stroke-width="1"/></svg>
<svg style="position:absolute;left:391px;top:94px;" width="17" height="4" viewBox="0 0 17 4"><path d="M0 3.5 L2 0.5 L4 3.5 L6 0.5 L8 3.5 L10 0.5 L12 3.5 L14 0.5 L16 3.5" fill="none" stroke="#e05a5a" stroke-width="1"/></svg>
<svg style="position:absolute;left:440px;top:94px;" width="25" height="4" viewBox="0 0 25 4"><path d="M0 3.5 L2 0.5 L4 3.5 L6 0.5 L8 3.5 L10 0.5 L12 3.5 L14 0.5 L16 3.5 L18 0.5 L20 3.5 L22 0.5 L24 3.5" fill="none" stroke="#e05a5a" stroke-width="1"/></svg>
<svg style="position:absolute;left:497px;top:94px;" width="86" height="4" viewBox="0 0 86 4"><path d="M0 3.5 L2 0.5 L4 3.5 L6 0.5 L8 3.5 L10 0.5 L12 3.5 L14 0.5 L16 3.5 L18 0.5 L20 3.5 L22 0.5 L24 3.5 L26 0.5 L28 3.5 L30 0.5 L32 3.5 L34 0.5 L36 3.5 L38 0.5 L40 3.5 L42 0.5 L44 3.5 L46 0.5 L48 3.5 L50 0.5 L52 3.5 L54 0.5 L56 3.5 L58 0.5 L60 3.5 L62 0.5 L64 3.5 L66 0.5 L68 3.5 L70 0.5 L72 3.5 L74 0.5 L76 3.5 L78 0.5 L80 3.5 L82 0.5 L84 3.5" fill="none" stroke="#e05a5a" stroke-width="1"/></svg>
<svg style="position:absolute;left:616px;top:94px;" width="70" height="4" viewBox="0 0 70 4"><path d="M0 3.5 L2 0.5 L4 3.5 L6 0.5 L8 3.5 L10 0.5 L12 3.5 L14 0.5 L16 3.5 L18 0.5 L20 3.5 L22 0.5 L24 3.5 L26 0.5 L28 3.5 L30 0.5 L32 3.5 L34 0.5 L36 3.5 L38 0.5 L40 3.5 L42 0.5 L44 3.5 L46 0.5 L48 3.5 L50 0.5 L52 3.5 L54 0.5 L56 3.5 L58 0.5 L60 3.5 L62 0.5 L64 3.5 L66 0.5 L68 3.5" fill="none" stroke="#e05a5a" stroke-width="1"/></svg>
<svg style="position:absolute;left:718px;top:94px;" width="14" height="4" viewBox="0 0 14 4"><path d="M0 3.5 L2 0.5 L4 3.5 L6 0.5 L8 3.5 L10 0.5 L12 3.5" fill="none" stroke="#e05a5a" stroke-width="1"/></svg>
<svg style="position:absolute;left:764px;top:94px;" width="108" height="4" viewBox="0 0 108 4"><path d="M0 3.5 L2 0.5 L4 3.5 L6 0.5 L8 3.5 L10 0.5 L12 3.5 L14 0.5 L16 3.5 L18 0.5 L20 3.5 L22 0.5 L24 3.5 L26 0.5 L28 3.5 L30 0.5 L32 3.5 L34 0.5 L36 3.5 L38 0.5 L40 3.5 L42 0.5 L44 3.5 L46 0.5 L48 3.5 L50 0.5 L52 3.5 L54 0.5 L56 3.5 L58 0.5 L60 3.5 L62 0.5 L64 3.5 L66 0.5 L68 3.5 L70 0.5 L72 3.5 L74 0.5 L76 3.5 L78 0.5 L80 3.5 L82 0.5 L84 3.5 L86 0.5 L88 3.5 L90 0.5 L92 3.5 L94 0.5 L96 3.5 L98 0.5 L100 3.5 L102 0.5 L104 3.5 L106 0.5 L108 3.5" fill="none" stroke="#e05a5a" stroke-width="1"/></svg>
<svg style="position:absolute;left:80px;top:50px;" width="2" height="22" viewBox="0 0 2 22"><path d="M1 0 V22" stroke="#6a6d70" stroke-width="1" stroke-dasharray="1.2 2.2"/></svg>
<svg style="position:absolute;left:136px;top:50px;" width="2" height="22" viewBox="0 0 2 22"><path d="M1 0 V22" stroke="#6a6d70" stroke-width="1" stroke-dasharray="1.2 2.2"/></svg>
<svg style="position:absolute;left:217px;top:50px;" width="2" height="22" viewBox="0 0 2 22"><path d="M1 0 V22" stroke="#6a6d70" stroke-width="1" stroke-dasharray="1.2 2.2"/></svg>
<svg style="position:absolute;left:273px;top:50px;" width="2" height="22" viewBox="0 0 2 22"><path d="M1 0 V22" stroke="#6a6d70" stroke-width="1" stroke-dasharray="1.2 2.2"/></svg>
<svg style="position:absolute;left:329px;top:50px;" width="2" height="22" viewBox="0 0 2 22"><path d="M1 0 V22" stroke="#6a6d70" stroke-width="1" stroke-dasharray="1.2 2.2"/></svg>
<svg style="position:absolute;left:578px;top:50px;" width="2" height="22" viewBox="0 0 2 22"><path d="M1 0 V22" stroke="#6a6d70" stroke-width="1" stroke-dasharray="1.2 2.2"/></svg>
<svg style="position:absolute;left:635px;top:50px;" width="2" height="22" viewBox="0 0 2 22"><path d="M1 0 V22" stroke="#6a6d70" stroke-width="1" stroke-dasharray="1.2 2.2"/></svg>
<svg style="position:absolute;left:741px;top:50px;" width="2" height="22" viewBox="0 0 2 22"><path d="M1 0 V22" stroke="#6a6d70" stroke-width="1" stroke-dasharray="1.2 2.2"/></svg>
<svg style="position:absolute;left:7px;top:53px;" width="15" height="14" viewBox="0 0 15 14"><path d="M1 1.2 H6 L7.3 2.7 H13 V3.8" fill="none" stroke="#d7a463" stroke-width="1.6"/><rect x="1" y="4.5" width="13" height="8.5" fill="none" stroke="#d7a463" stroke-width="1.8"/></svg>
<svg style="position:absolute;left:32px;top:53px;" width="14" height="14" viewBox="0 0 14 14"><path d="M0.5 0.5 H13.5 V13.5 H0.5 Z" fill="#8a8a8a"/><rect x="3.5" y="1" width="7" height="5" fill="#e8e8e8"/><rect x="4.5" y="2.3" width="5" height="0.9" fill="#8a8a8a"/><rect x="4.5" y="4" width="5" height="0.9" fill="#8a8a8a"/><rect x="3" y="8.5" width="8" height="5" fill="#3c3f41"/><rect x="5" y="10.5" width="4" height="2" fill="#4a9fd8"/></svg>
<svg style="position:absolute;left:57px;top:53px;" width="14" height="14" viewBox="0 0 14 14"><path d="M6 1.2 A5.3 5.8 0 0 0 6 12.8" fill="none" stroke="#4a9fd8" stroke-width="2.3"/><path d="M0 14 L6.8 14 L6.8 7.5 Z" fill="#4a9fd8"/><path d="M8 12.8 A5.3 5.8 0 0 0 8 1.2" fill="none" stroke="#4a9fd8" stroke-width="2.3"/><path d="M14 0 L7.2 0 L7.2 6.5 Z" fill="#5aaee0"/></svg>
<svg style="position:absolute;left:88px;top:54px;" width="15" height="13" viewBox="0 0 15 13"><path d="M13.5 1 Q13 8 6 8.5 L6 12 L0.5 6.5 L6 1.5 L6 4.5 Q10 4.5 13.5 1 Z" fill="#8d8d8d"/></svg>
<svg style="position:absolute;left:112px;top:54px;" width="15" height="13" viewBox="0 0 15 13"><path d="M1 11 Q1.5 4 8.5 3.5 L8.5 0 L14 5.5 L8.5 10.5 L8.5 7.5 Q4.5 7.5 1 11 Z" fill="#8d8d8d"/></svg>
<svg style="position:absolute;left:143px;top:52px;" width="15" height="15" viewBox="0 0 15 15"><path d="M3 0 L9 9 M12 0 L6 9" stroke="#a9a9a9" stroke-width="1.1"/><circle cx="4" cy="12" r="2.3" fill="none" stroke="#c08ad8" stroke-width="1.6"/><circle cx="11" cy="12" r="2.3" fill="none" stroke="#c08ad8" stroke-width="1.6"/><rect x="6.5" y="8" width="2" height="2" fill="none" stroke="#a9a9a9" stroke-width="0.8"/></svg>
<svg style="position:absolute;left:168px;top:52px;" width="15" height="15" viewBox="0 0 15 15"><path d="M5.5 0.7 H11 L14.3 4 V12 H5.5 Z" fill="#3c3f41" stroke="#9a9a9a" stroke-width="1.2"/><path d="M0.8 3.5 H6.5 L9.7 6.7 V14.3 H0.8 Z" fill="#3c3f41" stroke="#4a9fd8" stroke-width="1.5"/><path d="M6.2 3.5 V7 H9.7" fill="none" stroke="#4a9fd8" stroke-width="1.2"/></svg>
<svg style="position:absolute;left:193px;top:52px;" width="15" height="15" viewBox="0 0 15 15"><rect x="6" y="1.5" width="8.5" height="12" fill="#e0a050"/><rect x="8.5" y="0" width="3.5" height="2.2" fill="#9a9a9a"/><path d="M0.8 5 H6 L8.7 7.7 V14.3 H0.8 Z" fill="#3c3f41" stroke="#9a9a9a" stroke-width="1.4"/></svg>
<svg style="position:absolute;left:225px;top:52px;" width="15" height="15" viewBox="0 0 15 15"><circle cx="6" cy="6" r="4.7" fill="none" stroke="#9a9a9a" stroke-width="1.8"/><circle cx="6" cy="5.5" r="2.5" fill="#3d8fd1"/><path d="M9.5 9.5 L14 14" stroke="#9a9a9a" stroke-width="2.4"/></svg>
<svg style="position:absolute;left:249px;top:52px;" width="16" height="15" viewBox="0 0 16 15"><circle cx="8" cy="6" r="4.5" fill="none" stroke="#9a9a9a" stroke-width="1.7"/><circle cx="8" cy="5.5" r="2.3" fill="#3d8fd1"/><path d="M11.3 9.3 L15.3 13.3" stroke="#9a9a9a" stroke-width="2.2"/><text x="0" y="15" font-family="Liberation Sans" font-size="9" fill="#b0b0b0">A</text></svg>
<svg style="position:absolute;left:281px;top:54px;" width="14" height="12" viewBox="0 0 14 12"><path d="M0.8 6 L6 0.8 V3.8 H13.2 V8.2 H6 V11.2 Z" fill="none" stroke="#3d9be0" stroke-width="1.6"/></svg>
<svg style="position:absolute;left:306px;top:54px;" width="14" height="12" viewBox="0 0 14 12"><path d="M13.2 6 L8 0.8 V3.8 H0.8 V8.2 H8 V11.2 Z" fill="none" stroke="#8d8d8d" stroke-width="1.6"/></svg>
<svg style="position:absolute;left:337px;top:53px;" width="16" height="15" viewBox="0 0 16 15"><path d="M3 0 V8 M0 6.5 L3 10.5 L6 6.5" fill="none" stroke="#3db053" stroke-width="2"/><path d="M1.5 6 H4.5 L3 11 Z" fill="#3db053"/><text x="7.5" y="4.8" font-family="Liberation Mono" font-size="5.6" font-weight="bold" fill="#c8c8c8">01</text><text x="7.5" y="9.8" font-family="Liberation Mono" font-size="5.6" font-weight="bold" fill="#c8c8c8">10</text><text x="7.5" y="14.8" font-family="Liberation Mono" font-size="5.6" font-weight="bold" fill="#c8c8c8">01</text></svg>
<div style="left:359px;top:51px;width:65px;height:19px;background:transparent;border:1px solid #5e6163;border-radius:4px;"></div>
<svg style="position:absolute;left:364px;top:53px;" width="15" height="15" viewBox="0 0 15 15"><g transform="scale(1.0)"><path d="M3.5 5.5 A4 4 0 0 1 11.5 5.5 Z" fill="#a4c639"/><rect x="3.5" y="6.3" width="8" height="6" rx="0.8" fill="#a4c639"/><rect x="1" y="6.3" width="1.8" height="4.8" rx="0.9" fill="#a4c639"/><rect x="12.2" y="6.3" width="1.8" height="4.8" rx="0.9" fill="#a4c639"/><rect x="5" y="11" width="1.8" height="3.5" rx="0.9" fill="#a4c639"/><rect x="8.2" y="11" width="1.8" height="3.5" rx="0.9" fill="#a4c639"/><path d="M4.5 1 L5.8 3 M10.5 1 L9.2 3" stroke="#a4c639" stroke-width="0.9"/><circle cx="6" cy="4" r="0.6" fill="#3c3f41"/><circle cx="9" cy="4" r="0.6" fill="#3c3f41"/></g></svg>
<svg style="position:absolute;left:377px;top:64px;" width="4" height="4" viewBox="0 0 4 4"><circle cx="2" cy="2" r="1.8" fill="#3db053"/></svg>
<div class="t" style="left:382.5px;top:51px;height:19px;line-height:19px;font-size:13px;color:#bbbbbb;font-family:'Liberation Sans',sans-serif;transform:scaleX(1.1065);transform-origin:0 0;">app</div>
<svg style="position:absolute;left:410px;top:58px;" width="9" height="5" viewBox="0 0 9 5"><path d="M0 0 H9 L4.5 5 Z" fill="#c8c8c8"/></svg>
<svg style="position:absolute;left:429px;top:53px;" width="18" height="15" viewBox="0 0 18 15"><path d="M4 0 L0.5 8 H3 L1.5 13 L6 5 H3.5 Z" fill="#f0c030"/><path d="M7 0.5 L17.5 7.5 L7 14.5 Z" fill="#3db053"/></svg>
<svg style="position:absolute;left:456px;top:52px;" width="14" height="15" viewBox="0 0 14 15"><ellipse cx="7" cy="8.5" rx="4.5" ry="5.5" fill="#27a4a6"/><path d="M0 5 H14 M0 9 H14 M0 13 H14 M4 0.5 L5.5 3 M10 0.5 L8.5 3" stroke="#27a4a6" stroke-width="1.5"/><rect x="4.5" y="6.5" width="5" height="1" fill="#3c3f41"/><rect x="4.5" y="9.8" width="5" height="1" fill="#3c3f41"/></svg>
<svg style="position:absolute;left:480px;top:52px;" width="16" height="15" viewBox="0 0 16 15"><path d="M0.5 2 L8 7.5 L0.5 13 Z" fill="#6a6a6a"/><g fill="#5e5e5e"><rect x="6" y="1" width="2.5" height="2.5"/><rect x="10" y="1" width="2.5" height="2.5"/><rect x="8" y="3.5" width="2.5" height="2.5"/><rect x="12" y="3.5" width="2.5" height="2.5"/><rect x="10" y="6" width="2.5" height="2.5"/><rect x="6" y="8.5" width="2.5" height="2.5"/><rect x="12" y="8.5" width="2.5" height="2.5"/><rect x="8" y="11" width="2.5" height="2.5"/><rect x="10" y="13" width="2.5" height="2"/></g></svg>
<svg style="position:absolute;left:507px;top:52px;" width="14" height="16" viewBox="0 0 14 16"><rect x="0.7" y="0.7" width="6" height="14" rx="1" fill="#6e6e6e" stroke="#9a9a9a" stroke-width="1"/><rect x="2" y="2.5" width="3.5" height="9" fill="#8a8a8a"/><circle cx="10" cy="12" r="3" fill="#3db053"/><path d="M7 12 H13 M10 9 V15" stroke="#3c3f41" stroke-width="0.6"/></svg>
<svg style="position:absolute;left:530px;top:52px;" width="16" height="16" viewBox="0 0 16 16"><path d="M7 14 A6 6 0 0 1 8 2" fill="none" stroke="#3db053" stroke-width="2.2"/><path d="M7 0 L11.5 2.5 L7 5.5 Z" fill="#3db053"/><rect x="8" y="7.5" width="7.5" height="8" fill="#9a9a9a"/></svg>
<div style="left:557px;top:54px;width:12px;height:12px;background:#e06150;"></div>
<svg style="position:absolute;left:587px;top:53px;" width="15" height="15" viewBox="0 0 15 15"><path d="M2.5 0.7 L5.5 0.7 L7 3.3 L5.5 6 L2.5 6 L1 3.3 Z" fill="none" stroke="#e0a050" stroke-width="1.5"/><path d="M4 13.5 L9.5 8 A3.2 3.2 0 1 0 13 4 L11 6 L9.5 4.5 L11.5 2.5" fill="none" stroke="#9a9a9a" stroke-width="2.3" stroke-linejoin="round"/></svg>
<svg style="position:absolute;left:611px;top:52px;" width="16" height="16" viewBox="0 0 16 16"><path d="M3 1 H12 M1 3 H10 V5" fill="none" stroke="#9a9a9a" stroke-width="1.3"/><rect x="0.7" y="4.5" width="8" height="11" fill="none" stroke="#9a9a9a" stroke-width="1.3"/><g fill="#3d8fd1"><rect x="9.5" y="6" width="2.5" height="2.5"/><rect x="13" y="6" width="2.5" height="2.5"/><rect x="9.5" y="9.5" width="2.5" height="2.5"/><rect x="13" y="9.5" width="2.5" height="2.5"/><rect x="6" y="13" width="2.5" height="2.5"/><rect x="9.5" y="13" width="2.5" height="2.5"/><rect x="13" y="13" width="2.5" height="2.5"/></g><path d="M3 7.5 H6 M3 10 H6" stroke="#9a9a9a" stroke-width="1"/></svg>
<svg style="position:absolute;left:644px;top:52px;" width="12" height="16" viewBox="0 0 12 16"><path d="M1.5 6 A4.5 4.5 0 1 1 10.5 6" fill="none" stroke="#7fc94a" stroke-width="1.8" stroke-dasharray="9 3"/><circle cx="6" cy="5.5" r="2" fill="#3db053"/><path d="M6 8 V12" stroke="#3d9be0" stroke-width="2.5"/><path d="M1.5 11 H10.5 L6 16 Z" fill="#3d9be0"/></svg>
<svg style="position:absolute;left:667px;top:52px;" width="17" height="16" viewBox="0 0 17 16"><rect x="0.7" y="0.7" width="9" height="14.6" rx="1" fill="#6e6e6e" stroke="#a0a0a0" stroke-width="1"/><rect x="2.5" y="2.5" width="5.5" height="10" fill="#a66ec0"/><path d="M7 15.5 A5 4 0 0 1 17 15.5 Z" fill="#a4c639"/><rect x="7" y="12.5" width="10" height="3.5" fill="#a4c639"/></svg>
<svg style="position:absolute;left:694px;top:52px;" width="12" height="16" viewBox="0 0 12 16"><path d="M2 5 A4 4 0 0 1 10 5 Z" fill="#a4c639"/><rect x="0.5" y="6" width="11" height="10" fill="#5aa0d8"/><path d="M6 7.5 V13 M3.5 10.5 L6 13 L8.5 10.5" fill="none" stroke="#2b2b2b" stroke-width="1.4"/><path d="M3 0.5 L4 2.5 M9 0.5 L8 2.5" stroke="#a4c639" stroke-width="0.9"/></svg>
<svg style="position:absolute;left:717px;top:52px;" width="15" height="15" viewBox="0 0 15 15"><g transform="scale(1.0)"><path d="M3.5 5.5 A4 4 0 0 1 11.5 5.5 Z" fill="#a4c639"/><rect x="3.5" y="6.3" width="8" height="6" rx="0.8" fill="#a4c639"/><rect x="1" y="6.3" width="1.8" height="4.8" rx="0.9" fill="#a4c639"/><rect x="12.2" y="6.3" width="1.8" height="4.8" rx="0.9" fill="#a4c639"/><rect x="5" y="11" width="1.8" height="3.5" rx="0.9" fill="#a4c639"/><rect x="8.2" y="11" width="1.8" height="3.5" rx="0.9" fill="#a4c639"/><path d="M4.5 1 L5.8 3 M10.5 1 L9.2 3" stroke="#a4c639" stroke-width="0.9"/><circle cx="6" cy="4" r="0.6" fill="#3c3f41"/><circle cx="9" cy="4" r="0.6" fill="#3c3f41"/></g></svg>
<div class="t" style="left:751px;top:49px;height:22px;line-height:22px;font-size:19px;color:#3d9be0;font-family:'Liberation Sans',sans-serif;font-weight:bold;">?</div>
<svg style="position:absolute;left:1872px;top:52px;" width="15" height="15" viewBox="0 0 15 15"><circle cx="6" cy="6" r="4.7" fill="none" stroke="#8a8a8a" stroke-width="1.8"/><path d="M9.5 9.5 L14 14" stroke="#8a8a8a" stroke-width="2.4"/></svg>
<svg style="position:absolute;left:1895px;top:50px;" width="16" height="16" viewBox="0 0 16 16"><rect width="16" height="16" fill="#c8c8c8"/><circle cx="8" cy="6" r="3.3" fill="#fff"/><path d="M2 16 Q2 10 8 10 Q14 10 14 16 Z" fill="#fff"/></svg>
<svg style="position:absolute;left:9px;top:-1px;" width="16" height="17" viewBox="0 0 16 17"><circle cx="7" cy="7" r="7" fill="#7fc04a"/><path d="M2.5 16 L7 6 L11.5 16" fill="none" stroke="#ececec" stroke-width="1.6"/><path d="M4 11.5 Q7 14 10 11.5" fill="none" stroke="#ececec" stroke-width="1.2"/><rect x="5.3" y="2.6" width="3.4" height="5" rx="1.5" fill="#6e6e70"/><rect x="6.3" y="4" width="1.4" height="1.4" fill="#7fc04a"/></svg>
<svg style="position:absolute;left:1797px;top:7px;" width="10" height="2" viewBox="0 0 10 2"><rect width="10" height="1" fill="#000"/></svg>
<svg style="position:absolute;left:1842px;top:2px;" width="10" height="10" viewBox="0 0 10 10"><rect x="0.5" y="0.5" width="9" height="9" fill="none" stroke="#000" stroke-width="1"/></svg>
<svg style="position:absolute;left:1888px;top:2px;" width="11" height="11" viewBox="0 0 11 11"><path d="M0.5 0.5 L10.5 10.5 M10.5 0.5 L0.5 10.5" stroke="#000" stroke-width="1"/></svg>
<svg style="position:absolute;left:426px;top:137px;" width="9" height="9" viewBox="0 0 9 9"><rect x="0.5" y="0.5" width="8" height="8" fill="#2b2b2b" stroke="#6a6a6a" stroke-width="1"/><path d="M2 4.5 H7 M4.5 2 V7" stroke="#a8a8a8" stroke-width="1"/></svg>
<svg style="position:absolute;left:426px;top:263px;" width="9" height="10" viewBox="0 0 9 10"><path d="M0.5 0.5 H8.5 V6 L4.5 9.5 L0.5 6 Z" fill="#2b2b2b" stroke="#6a6a6a" stroke-width="1"/><path d="M2 4.5 H7" stroke="#a0a0a0" stroke-width="1"/></svg>
<svg style="position:absolute;left:426px;top:345px;" width="9" height="10" viewBox="0 0 9 10"><path d="M0.5 9.5 H8.5 V4 L4.5 0.5 L0.5 4 Z" fill="#2b2b2b" stroke="#6a6a6a" stroke-width="1"/><path d="M2 6.5 H7" stroke="#a0a0a0" stroke-width="1"/></svg>
<svg style="position:absolute;left:426px;top:389px;" width="9" height="10" viewBox="0 0 9 10"><path d="M0.5 0.5 H8.5 V6 L4.5 9.5 L0.5 6 Z" fill="#2b2b2b" stroke="#6a6a6a" stroke-width="1"/><path d="M2 4.5 H7" stroke="#a0a0a0" stroke-width="1"/></svg>
<svg style="position:absolute;left:426px;top:576px;" width="9" height="10" viewBox="0 0 9 10"><path d="M0.5 9.5 H8.5 V4 L4.5 0.5 L0.5 4 Z" fill="#2b2b2b" stroke="#6a6a6a" stroke-width="1"/><path d="M2 6.5 H7" stroke="#a0a0a0" stroke-width="1"/></svg>
<svg style="position:absolute;left:426px;top:620px;" width="9" height="9" viewBox="0 0 9 9"><rect x="0.5" y="0.5" width="8" height="8" fill="#2b2b2b" stroke="#6a6a6a" stroke-width="1"/><path d="M2 4.5 H7 M4.5 2 V7" stroke="#a8a8a8" stroke-width="1"/></svg>
<svg style="position:absolute;left:426px;top:662px;" width="9" height="9" viewBox="0 0 9 9"><rect x="0.5" y="0.5" width="8" height="8" fill="#2b2b2b" stroke="#6a6a6a" stroke-width="1"/><path d="M2 4.5 H7 M4.5 2 V7" stroke="#a8a8a8" stroke-width="1"/></svg>
<div style="left:478px;top:277px;width:1px;height:63px;background:#393939;"></div>
<div style="left:478px;top:403px;width:1px;height:168px;background:#393939;"></div>
<div style="left:518px;top:466px;width:1px;height:21px;background:#393939;"></div>
<div style="left:518px;top:508px;width:1px;height:21px;background:#393939;"></div>
<svg style="position:absolute;left:444px;top:318px;" width="12" height="16" viewBox="0 0 12 16"><circle cx="6" cy="5" r="5" fill="#e8683e"/><rect x="5.1" y="1.8" width="1.8" height="4.6" fill="#fff"/><rect x="5.1" y="7.2" width="1.8" height="1.3" fill="#fff"/><rect x="3.3" y="10" width="5.4" height="5" fill="#9a9a9a"/><rect x="3.3" y="11.3" width="5.4" height="0.8" fill="#5a5a5a"/><rect x="3.3" y="13" width="5.4" height="0.8" fill="#5a5a5a"/></svg>
<div style="left:665px;top:314px;width:104px;height:34px;background:transparent;border:2px solid #e0393e;"></div>
<div style="left:1880px;top:145px;width:14px;height:5px;background:#a52a2a;"></div>
<div style="left:1880px;top:153px;width:14px;height:3px;background:#a52a2a;"></div>
<div style="left:1880px;top:157px;width:14px;height:5px;background:#a52a2a;"></div>
<div style="left:1880px;top:176px;width:14px;height:3px;background:#a52a2a;"></div>
<div style="left:1880px;top:186px;width:14px;height:3px;background:#a52a2a;"></div>
<div style="left:1880px;top:216px;width:14px;height:12px;background:#a52a2a;"></div>
<div style="left:1880px;top:234px;width:14px;height:3px;background:#a52a2a;"></div>
<div style="left:1880px;top:285px;width:14px;height:7px;background:#a52a2a;"></div>
<div style="left:1880px;top:295px;width:14px;height:3px;background:#a52a2a;"></div>
<div style="left:1880px;top:301px;width:14px;height:3px;background:#a52a2a;"></div>
<div style="left:1880px;top:306px;width:14px;height:8px;background:#a52a2a;"></div>
<div style="left:1880px;top:321px;width:14px;height:3px;background:#a52a2a;"></div>
<div style="left:1880px;top:328px;width:14px;height:7px;background:#a52a2a;"></div>
<div style="left:1880px;top:336px;width:14px;height:7px;background:#a52a2a;"></div>
<div style="left:1880px;top:361px;width:14px;height:20px;background:#a52a2a;"></div>
<div style="left:1880px;top:382px;width:14px;height:7px;background:#a52a2a;"></div>
<div style="left:1880px;top:390px;width:14px;height:10px;background:#a52a2a;"></div>
<div style="left:1880px;top:402px;width:14px;height:3px;background:#a52a2a;"></div>
<div style="left:1880px;top:407px;width:14px;height:3px;background:#a52a2a;"></div>
<div style="left:1880px;top:427px;width:14px;height:6px;background:#a52a2a;"></div>
<div style="left:1880px;top:442px;width:14px;height:4px;background:#a52a2a;"></div>
<div style="left:1880px;top:457px;width:14px;height:6px;background:#a52a2a;"></div>
<div style="left:1880px;top:464px;width:14px;height:22px;background:#a52a2a;"></div>
<div style="left:1880px;top:487px;width:14px;height:3px;background:#a52a2a;"></div>
<div style="left:1880px;top:491px;width:14px;height:4px;background:#a52a2a;"></div>
<div style="left:1880px;top:496px;width:14px;height:4px;background:#a52a2a;"></div>
<div style="left:1880px;top:503px;width:14px;height:8px;background:#a52a2a;"></div>
<div style="left:1880px;top:512px;width:14px;height:6px;background:#a52a2a;"></div>
<div style="left:1880px;top:521px;width:14px;height:5px;background:#a52a2a;"></div>
<div style="left:1880px;top:529px;width:14px;height:12px;background:#a52a2a;"></div>
<div style="left:1880px;top:543px;width:14px;height:6px;background:#a52a2a;"></div>
<div style="left:1880px;top:551px;width:14px;height:9px;background:#a52a2a;"></div>
<div style="left:1880px;top:561px;width:14px;height:7px;background:#a52a2a;"></div>
<div style="left:1880px;top:573px;width:14px;height:6px;background:#a52a2a;"></div>
<div style="left:1880px;top:587px;width:14px;height:6px;background:#a52a2a;"></div>
<div style="left:1880px;top:596px;width:14px;height:9px;background:#a52a2a;"></div>
<div style="left:1880px;top:612px;width:14px;height:3px;background:#a52a2a;"></div>
<div style="left:1880px;top:617px;width:14px;height:6px;background:#a52a2a;"></div>
<div style="left:1880px;top:630px;width:14px;height:10px;background:#a52a2a;"></div>
<div style="left:1880px;top:641px;width:14px;height:7px;background:#a52a2a;"></div>
<div style="left:1880px;top:651px;width:14px;height:13px;background:#a52a2a;"></div>
<div style="left:1880px;top:667px;width:14px;height:19px;background:#a52a2a;"></div>
<div style="left:1880px;top:196px;width:14px;height:3px;background:#d4a520;"></div>
<div style="left:1880px;top:201px;width:14px;height:3px;background:#d4a520;"></div>
<div style="left:1880px;top:212px;width:14px;height:3px;background:#d4a520;"></div>
<div style="left:1880px;top:318px;width:14px;height:3px;background:#d4a520;"></div>
<div style="left:1880px;top:331px;width:14px;height:1px;background:#d4a520;"></div>
<div style="left:1880px;top:354px;width:14px;height:3px;background:#d4a520;"></div>
<div style="left:1880px;top:358px;width:14px;height:3px;background:#d4a520;"></div>
<div style="left:1880px;top:453px;width:14px;height:3px;background:#d4a520;"></div>
<div style="left:1880px;top:583px;width:14px;height:3px;background:#d4a520;"></div>
<div style="left:1880px;top:570px;width:14px;height:3px;background:#1e8fd0;"></div>
<div style="left:1885px;top:285px;width:9px;height:38px;background:rgba(160,160,160,0.35);"></div>
<svg style="position:absolute;left:1882px;top:130px;" width="11" height="11" viewBox="0 0 11 11"><circle cx="5.5" cy="5.5" r="5.2" fill="#c03030"/><rect x="4.6" y="2" width="1.8" height="4.5" fill="#fff"/><rect x="4.6" y="7.5" width="1.8" height="1.6" fill="#fff"/></svg>
<div style="left:90px;top:702px;width:76px;height:22px;background:#383a3c;"></div>
<div style="left:89px;top:702px;width:1px;height:22px;background:#2f3133;"></div>
<div style="left:166px;top:702px;width:1px;height:22px;background:#333537;"></div>
<div class="t" style="left:27px;top:702px;height:22px;line-height:22px;font-size:13px;color:#bbbbbb;font-family:'Liberation Sans',sans-serif;transform:scaleX(0.8606);transform-origin:0 0;">Messages:</div>
<div class="t" style="left:96.5px;top:702px;height:22px;line-height:22px;font-size:13px;color:#bbbbbb;font-family:'Liberation Sans',sans-serif;transform:scaleX(0.8779);transform-origin:0 0;">Gradle Sync</div>
<div class="t" style="left:174.5px;top:702px;height:22px;line-height:22px;font-size:13px;color:#bbbbbb;font-family:'Liberation Sans',sans-serif;transform:scaleX(0.9044);transform-origin:0 0;">Gradle Build</div>
<svg style="position:absolute;left:1847px;top:706px;" width="12" height="12" viewBox="0 0 12 12"><g transform="scale(0.9230769230769231)"><path d="M6.5 0.5 L7.8 0.5 L8.1 2.3 L9.6 3 L11.1 2 L12 2.9 L11 4.4 L11.7 5.9 L13 6.2 V7.5 L11.7 7.8 L11 9.3 L12 10.8 L11.1 11.7 L9.6 10.7 L8.1 11.4 L7.8 13 H5.5 L5.2 11.4 L3.7 10.7 L2.2 11.7 L1.3 10.8 L2.3 9.3 L1.6 7.8 L0 7.5 V6.2 L1.6 5.9 L2.3 4.4 L1.3 2.9 L2.2 2 L3.7 3 L5.2 2.3 L5.5 0.5 Z" fill="#9a9a9a"/><circle cx="6.6" cy="6.8" r="2" fill="#3c3f41"/></g></svg>
<svg style="position:absolute;left:1861px;top:711px;" width="5" height="3" viewBox="0 0 5 3"><path d="M0 0 H5 L2.5 3 Z" fill="#9a9a9a"/></svg>
<svg style="position:absolute;left:1876px;top:705px;" width="12" height="14" viewBox="0 0 12 14"><path d="M6 0 V7 M3.5 4.5 L6 7.5 L8.5 4.5" fill="none" stroke="#9a9a9a" stroke-width="1.2"/><rect x="0.5" y="9.5" width="11" height="3.5" fill="none" stroke="#9a9a9a" stroke-width="1"/><rect x="6" y="10.5" width="5" height="1.5" fill="#9a9a9a"/></svg>
<div style="left:30px;top:732px;width:12px;height:12px;background:#7d7d7d;"></div>
<svg style="position:absolute;left:29px;top:756px;" width="13" height="13" viewBox="0 0 13 13"><path d="M1.5 1.5 L11.5 11.5 M11.5 1.5 L1.5 11.5" stroke="#e0554a" stroke-width="2.2"/></svg>
<svg style="position:absolute;left:29px;top:781px;" width="14" height="14" viewBox="0 0 14 14"><path d="M7 1 L1.5 7 H4.5 V13 H9.5 V7 H12.5 Z" fill="#8a8a8a"/></svg>
<svg style="position:absolute;left:29px;top:806px;" width="14" height="14" viewBox="0 0 14 14"><path d="M7 13 L1.5 7 H4.5 V1 H9.5 V7 H12.5 Z" fill="#3d9be0"/></svg>
<svg style="position:absolute;left:29px;top:829px;" width="15" height="17" viewBox="0 0 15 17"><path d="M1 5 H5 M1 5 V16 H11 V12" fill="none" stroke="#9a9a9a" stroke-width="1.5"/><path d="M9 12 V3 M5.5 6 L9 2 L12.5 6" fill="none" stroke="#3db053" stroke-width="2"/></svg>
<div class="t" style="left:30px;top:851px;height:22px;line-height:22px;font-size:19px;color:#3d9be0;font-family:'Liberation Sans',sans-serif;font-weight:bold;">?</div>
<svg style="position:absolute;left:58px;top:731px;" width="13" height="14" viewBox="0 0 13 14"><rect x="0" y="0" width="13" height="1.6" fill="#b0b0b0"/><rect x="0" y="12.4" width="13" height="1.6" fill="#b0b0b0"/><path d="M3 6 L6.5 2.5 L10 6 Z M3 8 L6.5 11.5 L10 8 Z" fill="#3d9be0"/></svg>
<svg style="position:absolute;left:58px;top:755px;" width="13" height="15" viewBox="0 0 13 15"><rect x="0" y="5.3" width="13" height="1.5" fill="#b0b0b0"/><rect x="0" y="8.3" width="13" height="1.5" fill="#b0b0b0"/><path d="M3 0.5 H10 L6.5 4 Z M3 14.5 H10 L6.5 11 Z" fill="#3d9be0"/></svg>
<svg style="position:absolute;left:58px;top:780px;" width="14" height="15" viewBox="0 0 14 15"><path d="M7 0 V8 M3.5 5 L7 8.5 L10.5 5" fill="none" stroke="#b0b0b0" stroke-width="1.5"/><path d="M1 8 V14 H13 V8" fill="none" stroke="#e0a050" stroke-width="1.8"/><rect x="1" y="11" width="12" height="3" fill="#e0a050"/></svg>
<svg style="position:absolute;left:58px;top:805px;" width="14" height="15" viewBox="0 0 14 15"><rect x="0.7" y="0.7" width="12.6" height="13.6" fill="none" stroke="#8a8a8a" stroke-width="1.4"/><rect x="0" y="0" width="14" height="3" fill="#4a9fd8"/><rect x="3" y="5" width="8" height="7" fill="#4a9fd8"/><path d="M4.5 7 H9.5 M4.5 9.5 H9.5" stroke="#3c3f41" stroke-width="0.9"/></svg>
<svg style="position:absolute;left:58px;top:831px;" width="16" height="16" viewBox="0 0 16 16"><path d="M0.5 0.5 H13.5 L8.5 6.5 V13 L5.5 11 V6.5 Z" fill="#3d9be0"/><path d="M12 13 H16 L14 15.5 Z" fill="#c8c8c8"/></svg>
<div class="t" style="left:120.5px;top:725px;height:20px;line-height:20px;font-size:13px;color:#bbbbbb;font-family:'Liberation Sans',sans-serif;transform:scaleX(0.9840);transform-origin:0 0;">:library:generateReleaseSources</div>
<div class="t" style="left:120.5px;top:744px;height:20px;line-height:20px;font-size:13px;color:#bbbbbb;font-family:'Liberation Sans',sans-serif;transform:scaleX(0.9875);transform-origin:0 0;">:library:incrementalReleaseJavaCompilationSafeguard</div>
<div class="t" style="left:120.5px;top:763px;height:20px;line-height:20px;font-size:13px;color:#bbbbbb;font-family:'Liberation Sans',sans-serif;transform:scaleX(0.9747);transform-origin:0 0;">:library:compileReleaseJavaWithJavac</div>
<div class="t" style="left:120.5px;top:782px;height:20px;line-height:20px;font-size:13px;color:#bbbbbb;font-family:'Liberation Sans',sans-serif;transform:scaleX(0.9951);transform-origin:0 0;">:library:compileReleaseJavaWithJavac - is not incremental (e.g. outputs have changed, no previous execution, etc.).</div>
<svg style="position:absolute;left:85px;top:806px;" width="9" height="9" viewBox="0 0 9 9"><path d="M0 1 H9 L4.5 8.5 Z" fill="#a0a0a0"/></svg>
<svg style="position:absolute;left:103px;top:803px;" width="12" height="15" viewBox="0 0 12 15"><path d="M0.7 0.7 H8 L11.3 4 V14.3 H0.7 Z" fill="none" stroke="#a0a0a0" stroke-width="1.2"/><text x="4" y="11" font-family="Liberation Sans" font-size="8" font-weight="bold" fill="#6fa8dc">j</text></svg>
<div class="t" style="left:120.5px;top:801px;height:20px;line-height:20px;font-size:13px;color:#bbbbbb;font-family:'Liberation Sans',sans-serif;transform:scaleX(1.0404);transform-origin:0 0;">C:\Users\Lcc\Desktop\android\cnblogs\app\libs\SlidingMenu\library\src\com\jeremyfeinstein\slidingmenu\lib\</div>
<div class="t" style="left:764.0px;top:801px;height:20px;line-height:20px;font-size:13px;color:#bbbbbb;font-family:'Liberation Sans',sans-serif;transform:scaleX(0.9792);transform-origin:0 0;">CustomViewAbove.java</div>
<div style="left:81px;top:820px;width:1799px;height:53px;background:#0d293e;"></div>
<svg style="position:absolute;left:122px;top:839px;" width="15" height="15" viewBox="0 0 15 15"><circle cx="7.5" cy="7.5" r="7" fill="#e05555"/><rect x="6.5" y="3" width="2" height="6" fill="#fff"/><rect x="6.5" y="10.3" width="2" height="2" fill="#fff"/></svg>
<div class="t" style="left:140.5px;top:819px;height:20px;line-height:20px;font-size:13px;color:#bbbbbb;font-family:'Liberation Sans',sans-serif;transform:scaleX(0.9366);transform-origin:0 0;">错误: 找不到符号</div>
<div class="t" style="left:140.5px;top:836px;height:20px;line-height:20px;font-size:13px;color:#bbbbbb;font-family:'Liberation Sans',sans-serif;transform:scaleX(0.9758);transform-origin:0 0;">符号:   方法 sin(float)</div>
<div class="t" style="left:140.5px;top:853px;height:20px;line-height:20px;font-size:13px;color:#bbbbbb;font-family:'Liberation Sans',sans-serif;transform:scaleX(0.9848);transform-origin:0 0;">位置: 类 FloatMath</div>
<div class="t" style="left:120.5px;top:873px;height:20px;line-height:20px;font-size:13px;color:#bbbbbb;font-family:'Liberation Sans',sans-serif;transform:scaleX(0.9030);transform-origin:0 0;">注: 某些输入文件使用或覆盖了已过时的 API。</div>
<div class="t" style="left:120.5px;top:892px;height:20px;line-height:20px;font-size:13px;color:#bbbbbb;font-family:'Liberation Sans',sans-serif;transform:scaleX(0.9439);transform-origin:0 0;">注: 有关详细信息, 请使用 -Xlint:deprecation 重新编译。</div>
<div class="t" style="left:120.5px;top:911px;height:20px;line-height:20px;font-size:13px;color:#bbbbbb;font-family:'Liberation Sans',sans-serif;transform:scaleX(0.9530);transform-origin:0 0;">1 个错误</div>
<div class="t" style="left:120.5px;top:930px;height:20px;line-height:20px;font-size:13px;color:#bbbbbb;font-family:'Liberation Sans',sans-serif;transform:scaleX(0.9626);transform-origin:0 0;">:library:compileReleaseJavaWithJavac FAILED</div>
<svg style="position:absolute;left:102px;top:959px;" width="15" height="15" viewBox="0 0 15 15"><circle cx="7.5" cy="7.5" r="7" fill="#e05555"/><rect x="6.5" y="3" width="2" height="6" fill="#fff"/><rect x="6.5" y="10.3" width="2" height="2" fill="#fff"/></svg>
<div class="t" style="left:120.5px;top:949px;height:20px;line-height:20px;font-size:13px;color:#bbbbbb;font-family:'Liberation Sans',sans-serif;transform:scaleX(0.9919);transform-origin:0 0;">Execution failed for task ':library:compileReleaseJavaWithJavac'.</div>
<div class="t" style="left:120.5px;top:966px;height:20px;line-height:20px;font-size:13px;color:#bbbbbb;font-family:'Liberation Sans',sans-serif;transform:scaleX(1.0403);transform-origin:0 0;">> Compilation failed; see the compiler error output for details.</div>
<div style="left:1882px;top:883px;width:10px;height:70px;background:#4f5152;border-radius:5px;"></div>
<div style="left:763px;top:799px;width:145px;height:23px;background:transparent;border:2px solid #e0393e;"></div>
<div style="left:97px;top:821px;width:164px;height:53px;background:transparent;border:2px solid #e0393e;"></div>
<div style="left:384px;top:996px;width:102px;height:22px;background:#2f3133;"></div>
<svg style="position:absolute;left:29px;top:1001px;" width="14" height="15" viewBox="0 0 14 15"><path d="M1 1 L12 7.5 L1 14 Z" fill="#3db053"/><circle cx="11" cy="12" r="2.2" fill="#3db053"/></svg>
<div class="t" style="left:45.5px;top:1000px;height:20px;line-height:20px;font-size:13px;color:#bbbbbb;font-family:'Liberation Sans',sans-serif;transform:scaleX(0.8877);transform-origin:0 0;"><u>4</u>: Run</div>
<svg style="position:absolute;left:99px;top:1000px;" width="15" height="15" viewBox="0 0 15 15"><rect x="1" y="1" width="9" height="6" rx="1" fill="#d8d8d8"/><circle cx="9" cy="9" r="3.5" fill="#e8a060"/><rect x="4" y="11" width="10" height="4" fill="#3d8fd1"/></svg>
<div class="t" style="left:115.5px;top:1000px;height:20px;line-height:20px;font-size:13px;color:#bbbbbb;font-family:'Liberation Sans',sans-serif;transform:scaleX(0.8843);transform-origin:0 0;">TODO</div>
<svg style="position:absolute;left:169px;top:1000px;" width="14" height="14" viewBox="0 0 14 14"><g transform="scale(0.9333333333333333)"><path d="M3.5 5.5 A4 4 0 0 1 11.5 5.5 Z" fill="#a4c639"/><rect x="3.5" y="6.3" width="8" height="6" rx="0.8" fill="#a4c639"/><rect x="1" y="6.3" width="1.8" height="4.8" rx="0.9" fill="#a4c639"/><rect x="12.2" y="6.3" width="1.8" height="4.8" rx="0.9" fill="#a4c639"/><rect x="5" y="11" width="1.8" height="3.5" rx="0.9" fill="#a4c639"/><rect x="8.2" y="11" width="1.8" height="3.5" rx="0.9" fill="#a4c639"/><path d="M4.5 1 L5.8 3 M10.5 1 L9.2 3" stroke="#a4c639" stroke-width="0.9"/><circle cx="6" cy="4" r="0.6" fill="#3c3f41"/><circle cx="9" cy="4" r="0.6" fill="#3c3f41"/></g></svg>
<div class="t" style="left:186.5px;top:1000px;height:20px;line-height:20px;font-size:13px;color:#bbbbbb;font-family:'Liberation Sans',sans-serif;transform:scaleX(0.9603);transform-origin:0 0;"><u>6</u>: Android Monitor</div>
<svg style="position:absolute;left:312px;top:1002px;" width="13" height="12" viewBox="0 0 13 12"><rect x="0.5" y="0.5" width="12" height="11" fill="#1e1e1e" stroke="#c8c8c8" stroke-width="1"/><path d="M2.5 3 L5 5 L2.5 7 M5.5 8.5 H9" fill="none" stroke="#e8e8e8" stroke-width="1"/></svg>
<div class="t" style="left:328.5px;top:1000px;height:20px;line-height:20px;font-size:13px;color:#bbbbbb;font-family:'Liberation Sans',sans-serif;transform:scaleX(0.9364);transform-origin:0 0;">Terminal</div>
<svg style="position:absolute;left:396px;top:1001px;" width="13" height="14" viewBox="0 0 13 14"><rect x="0.7" y="0.7" width="11.6" height="12.6" fill="none" stroke="#e0a050" stroke-width="1.4"/><path d="M3 4 H10 M3 6.5 H10 M3 9 H10" stroke="#e0a050" stroke-width="1"/></svg>
<div class="t" style="left:412.5px;top:1000px;height:20px;line-height:20px;font-size:13px;color:#ffffff;font-family:'Liberation Sans',sans-serif;transform:scaleX(0.8684);transform-origin:0 0;"><u>0</u>: Messages</div>
<svg style="position:absolute;left:1691px;top:1001px;" width="12" height="13" viewBox="0 0 12 13"><rect x="0" y="0.5" width="11.5" height="9.5" rx="2" fill="#e8705f"/><path d="M7 9.5 L9.5 13 L9.5 9.5 Z" fill="#e8705f"/><rect x="4.9" y="2" width="1.8" height="4.2" fill="#fff"/><rect x="4.9" y="7" width="1.8" height="1.6" fill="#fff"/></svg>
<div class="t" style="left:1702px;top:1000px;height:22px;line-height:22px;font-size:11px;color:#bbbbbb;font-family:'Liberation Sans',sans-serif;">3</div>
<div class="t" style="left:1713.5px;top:1000px;height:20px;line-height:20px;font-size:13px;color:#bbbbbb;font-family:'Liberation Sans',sans-serif;transform:scaleX(0.9053);transform-origin:0 0;">Event Log</div>
<svg style="position:absolute;left:1788px;top:1001px;" width="12" height="13" viewBox="0 0 12 13"><rect x="0.5" y="0.5" width="11" height="12" fill="none" stroke="#8a8a8a" stroke-width="1"/><rect x="0" y="0" width="12" height="2" fill="#4a9fd8"/><rect x="2" y="4" width="8" height="7" fill="#4a9fd8"/><path d="M3 6 H9 M3 8.5 H9" stroke="#3c3f41" stroke-width="0.9"/></svg>
<div class="t" style="left:1804.5px;top:1000px;height:20px;line-height:20px;font-size:13px;color:#bbbbbb;font-family:'Liberation Sans',sans-serif;transform:scaleX(0.8857);transform-origin:0 0;">Gradle Console</div>
<div style="left:9px;top:1023px;width:15px;height:12px;background:#5a5a5a;border:1px solid #c8c8c8;"></div>
<div style="left:9px;top:1036px;width:15px;height:1px;background:#c8c8c8;"></div>
<div class="t" style="left:30.5px;top:1019px;height:21px;line-height:21px;font-size:13px;color:#bbbbbb;font-family:'Liberation Sans',sans-serif;transform:scaleX(1.0146);transform-origin:0 0;">Cannot resolve symbol 'FloatMath'</div>
<div class="t" style="left:1588.5px;top:1019px;height:21px;line-height:21px;font-size:13px;color:#bbbbbb;font-family:'Liberation Sans',sans-serif;transform:scaleX(0.9683);transform-origin:0 0;">303:27</div>
<div class="t" style="left:1637.5px;top:1019px;height:21px;line-height:21px;font-size:13px;color:#bbbbbb;font-family:'Liberation Sans',sans-serif;transform:scaleX(0.7910);transform-origin:0 0;">LF</div>
<svg style="position:absolute;left:1650px;top:1025px;" width="6" height="9" viewBox="0 0 6 9"><path d="M0.5 3.5 L3 0.5 L5.5 3.5 Z M0.5 5.5 L3 8.5 L5.5 5.5 Z" fill="#a0a0a0"/></svg>
<div class="t" style="left:1666.5px;top:1019px;height:21px;line-height:21px;font-size:13px;color:#bbbbbb;font-family:'Liberation Sans',sans-serif;transform:scaleX(0.9232);transform-origin:0 0;">UTF-8</div>
<svg style="position:absolute;left:1701px;top:1025px;" width="6" height="9" viewBox="0 0 6 9"><path d="M0.5 3.5 L3 0.5 L5.5 3.5 Z M0.5 5.5 L3 8.5 L5.5 5.5 Z" fill="#a0a0a0"/></svg>
<div class="t" style="left:1715.5px;top:1019px;height:21px;line-height:21px;font-size:13px;color:#bbbbbb;font-family:'Liberation Sans',sans-serif;transform:scaleX(1.0221);transform-origin:0 0;">Context: &lt;no context&gt;</div>
<svg style="position:absolute;left:1873px;top:1023px;" width="10" height="10" viewBox="0 0 10 10"><path d="M1.5 4.5 V2.2 Q1.5 0.6 3.2 0.6 H4.2 Q5.9 0.6 5.9 2.2" fill="none" stroke="#9a9a9a" stroke-width="1.1"/><rect x="2.5" y="4.5" width="7" height="5.5" fill="#9a9a9a"/></svg>
<svg style="position:absolute;left:1895px;top:1021px;" width="13" height="15" viewBox="0 0 13 15"><circle cx="6.5" cy="6" r="5" fill="none" stroke="#9a9a9a" stroke-width="1.3"/><path d="M1.5 6 H11.5 M4 12 L2 15 M9 12 L11 15 M6.5 11 V15" stroke="#9a9a9a" stroke-width="1.2"/></svg>
<div style="left:0px;top:1040px;width:1916px;height:8px;background:#1e1b18;"></div>
<div style="left:440px;top:1040px;width:45px;height:8px;background:#5a5a5a;"></div>
<div style="left:489px;top:1040px;width:48px;height:8px;background:#c8702a;"></div>
<div class="t" style="left:506px;top:1039px;height:18px;line-height:18px;font-size:13px;color:#7a4a20;font-family:'Liberation Sans',sans-serif;">10 个项目</div>
<div class="t" style="left:537px;top:1039px;height:18px;line-height:18px;font-size:13px;color:#b8b8b8;font-family:'Liberation Sans',sans-serif;">项目    选中 1 个项目  726 字节</div>
<div style="left:1568px;top:1041px;width:22px;height:7px;background:#2a3440;"></div>
<div style="left:1594px;top:1041px;width:14px;height:7px;background:#2c3a4a;"></div>
<div style="left:1615px;top:1040px;width:1px;height:8px;background:#3a3a3a;"></div>
<div class="t" style="left:1862px;top:1040px;height:16px;line-height:16px;font-size:12px;color:#e8e8e8;font-family:'Liberation Sans',sans-serif;">20:33</div>
</body></html>
